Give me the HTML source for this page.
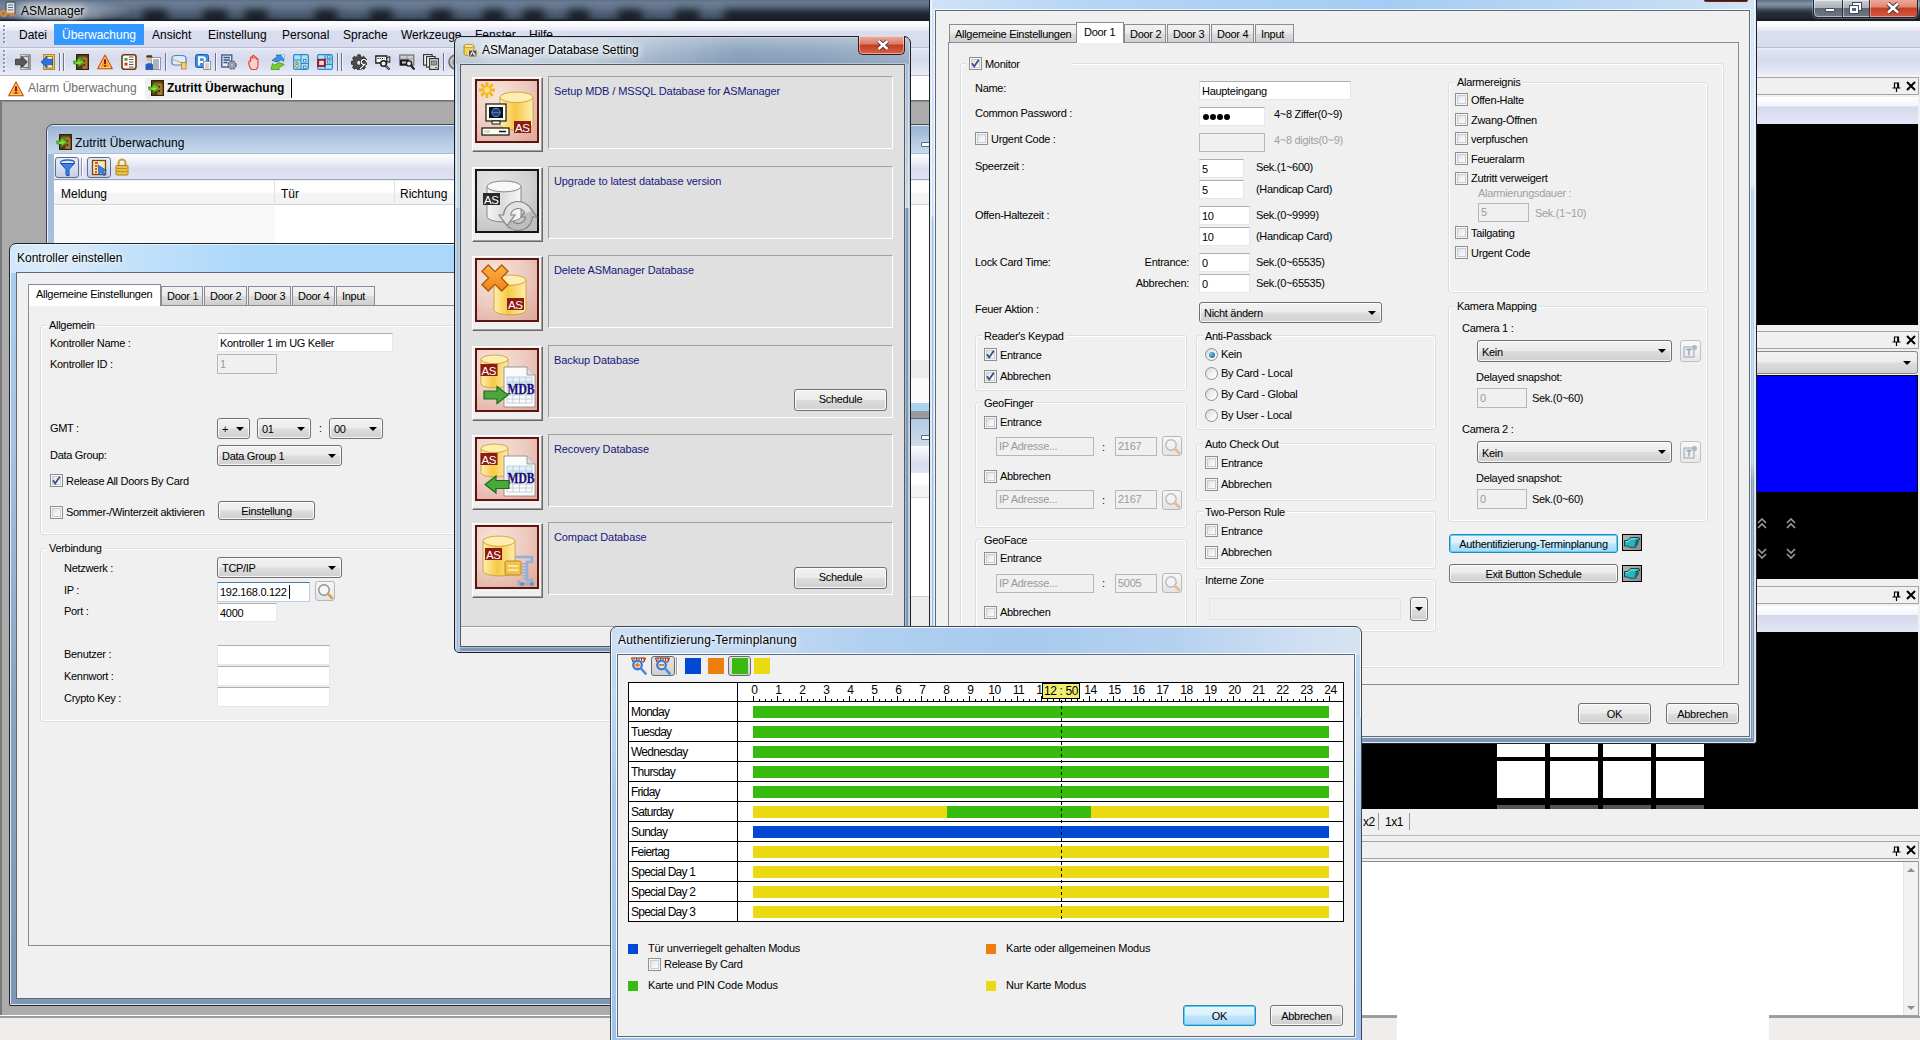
<!DOCTYPE html>
<html><head><meta charset="utf-8"><title>ASManager</title>
<style>
html,body{margin:0;padding:0;background:#ababab;}
body{width:1920px;height:1040px;overflow:hidden;font-family:"Liberation Sans",sans-serif;}
#root{position:relative;width:1920px;height:1040px;overflow:hidden;background:#ababab;}
#root div,#root span,#root svg.a{position:absolute;box-sizing:border-box;}
.t{font-size:11px;line-height:14px;letter-spacing:-0.3px;color:#000;white-space:pre;}
.t.g{color:#a0a0a0;}
.t.nv{color:#17177c;letter-spacing:-0.1px;}
.s{font-size:12px;line-height:16px;color:#000;white-space:pre;}
.gl{background:#f0f0f0;}
.tb{background:#fff;border:1px solid #e3e6ec;border-top-color:#abadb3;font-size:11px;letter-spacing:-0.3px;padding-left:2px;padding-top:1px;white-space:pre;overflow:hidden;color:#000;}
.tb.dis{background:#f0f0f0;border:1px solid #b4b8bc;color:#9a9a9a;padding-top:0;}
.tb.foc{border:1px solid #b5cfe7;border-top-color:#3d7bad;padding-top:0;}
.cb{width:13px;height:13px;border:1px solid #8e8f8f;background:linear-gradient(135deg,#d4d7da 0%,#f4f5f6 60%,#fff 100%);box-shadow:inset 0 0 0 1px #f6f6f6,inset 0 0 0 2px #c9ccd1;}
.rd{width:13px;height:13px;border:1px solid #8e8f8f;border-radius:50%;background:linear-gradient(135deg,#d4d7da 0%,#f4f5f6 60%,#fff 100%);}
.rd i{position:absolute;left:2.5px;top:2.5px;width:6px;height:6px;border-radius:50%;background:radial-gradient(circle at 35% 35%,#6ec3f0,#14538c);display:block;}
.cmb{border:1px solid #707070;border-radius:3px;background:linear-gradient(#f2f2f2 0%,#ebebeb 48%,#dddddd 52%,#cfcfcf 100%);box-shadow:inset 0 0 0 1px rgba(255,255,255,.8);font-size:11px;letter-spacing:-0.3px;white-space:pre;overflow:hidden;}
.cmb span{left:4px;top:1px;}
.cmb b{position:absolute;right:5px;top:50%;margin-top:-2px;width:0;height:0;border-left:4px solid transparent;border-right:4px solid transparent;border-top:4px solid #000;}
.btn{border:1px solid #707070;border-radius:3px;background:linear-gradient(#f2f2f2 0%,#ebebeb 48%,#dddddd 52%,#cfcfcf 100%);box-shadow:inset 0 0 0 1px rgba(255,255,255,.85);font-size:11px;letter-spacing:-0.3px;text-align:center;white-space:pre;overflow:hidden;padding-top:1px;}
.btn.def{border-color:#3c7fb1;background:linear-gradient(#eaf6fd 0%,#d9f0fc 48%,#bee6fd 52%,#a7d9f5 100%);box-shadow:inset 0 0 0 1px #48d8fb;}
.grp{border:1px solid #dadfe3;border-radius:3px;box-shadow:inset 0 0 0 1px #fff, 0 0 0 0 #fff;}
.tabpage{background:#f0f0f0;border:1px solid #898c95;}
.tab{border:1px solid #898c95;border-bottom:none;background:linear-gradient(#f2f2f2 0%,#ebebeb 48%,#dddddd 52%,#cfcfcf 100%);font-size:11px;letter-spacing:-0.3px;white-space:pre;}
.tab span{left:5px;top:2px;line-height:14px;}
.tab.sel{background:#fff;z-index:2;}
.tab.sel span{left:7px;top:2px;}
.magb{width:20px;height:20px;border:1px solid #b8b8b8;border-radius:3px;background:linear-gradient(#f6f6f6,#e4e4e4);}
.magb svg{position:absolute;left:0;top:0;}
</style></head><body><div id="root">
<div class="" style="left:0px;top:0px;width:1920px;height:21px;background:linear-gradient(#5f7186 0%,#6b7d94 12%,#64768d 35%,#5a6b82 55%,#52637a 80%,#46566a 100%);"></div>
<div style="left:0;top:0;width:1920px;height:21px;overflow:hidden">
<div class="" style="left:143px;top:10px;width:24px;height:16px;background:#161c24;filter:blur(4px)"></div>
<div class="" style="left:203px;top:10px;width:24px;height:16px;background:#161c24;filter:blur(4px)"></div>
<div class="" style="left:245px;top:10px;width:22px;height:16px;background:#161c24;filter:blur(4px)"></div>
<div class="" style="left:315px;top:10px;width:22px;height:16px;background:#161c24;filter:blur(4px)"></div>
<div class="" style="left:370px;top:10px;width:22px;height:16px;background:#161c24;filter:blur(4px)"></div>
<div class="" style="left:430px;top:10px;width:22px;height:16px;background:#161c24;filter:blur(4px)"></div>
<div class="" style="left:483px;top:10px;width:21px;height:16px;background:#161c24;filter:blur(4px)"></div>
<div class="" style="left:523px;top:10px;width:21px;height:16px;background:#161c24;filter:blur(4px)"></div>
<div class="" style="left:568px;top:10px;width:21px;height:16px;background:#161c24;filter:blur(4px)"></div>
<div class="" style="left:618px;top:10px;width:24px;height:16px;background:#161c24;filter:blur(4px)"></div>
<div class="" style="left:675px;top:10px;width:24px;height:16px;background:#161c24;filter:blur(4px)"></div>
<div class="" style="left:724px;top:10px;width:236px;height:16px;background:#161c24;filter:blur(4px)"></div>
<div class="" style="left:100px;top:14px;width:860px;height:10px;background:rgba(30,38,48,.3);filter:blur(3px)"></div>
</div>
<div class="" style="left:1750px;top:0px;width:170px;height:21px;background:linear-gradient(#5e6f82 0%,#8294a8 18%,#6c7d90 32%,#3b4652 48%,#262e38 62%,#1a2129 100%);"></div>
<div class="" style="left:0px;top:18px;width:1920px;height:2px;background:linear-gradient(rgba(20,25,32,0),rgba(20,25,32,.7))"></div>
<div class="" style="left:0px;top:20px;width:1920px;height:2px;background:#f4f6fb;border-top:1px solid #1c2128;"></div>
<div class="" style="left:0px;top:0px;width:130px;height:20px;background:radial-gradient(ellipse at 45% 55%,rgba(190,198,208,.75) 0%,rgba(170,180,192,.5) 40%,rgba(150,160,175,0) 75%)"></div>
<svg class="a" style="left:0;top:1px" width="17" height="18" viewBox="0 0 17 18"><rect x="6" y="1" width="9" height="12" rx="1" fill="#dfe6ee" stroke="#4a5868" stroke-width="1.3"/><path d="M8 4h5M8 6.5h5M8 9h5" stroke="#5b6b7d" stroke-width="1"/><circle cx="3.5" cy="12.5" r="2.6" fill="none" stroke="#e8892a" stroke-width="1.8"/><path d="M6 12.5h8M11 12.5v3M13.5 12.5v2.5" stroke="#e8892a" stroke-width="1.8"/></svg>
<span class="s" style="left:21px;top:3px;color:#000;text-shadow:0 0 6px #fff,0 0 8px #fff,0 0 10px rgba(255,255,255,.9);">ASManager</span>
<div class="" style="left:1813px;top:0px;width:105px;height:18px;border:1px solid #1c232b;border-top:none;border-radius:0 0 5px 5px;background:linear-gradient(#ccd1d7 0%,#a9b0b9 45%,#5f6975 50%,#6f7986 100%);box-shadow:inset 0 0 0 1px rgba(255,255,255,.5),0 0 0 1px rgba(255,255,255,.25);overflow:hidden"><div style="left:55px;top:-1px;width:49px;height:18px;background:linear-gradient(#ecb0a2 0%,#df8570 45%,#c63d24 50%,#d25a40 100%);border-left:1px solid #4a2a26;box-shadow:inset 0 0 0 1px rgba(255,255,255,.4)"></div><div style="left:28px;top:-1px;width:1px;height:18px;background:#2a323c"></div><div style="left:29px;top:0;width:1px;height:17px;background:rgba(255,255,255,.4)"></div><div style="left:11px;top:8px;width:10px;height:4px;background:#fff;border:1px solid #444c56;border-radius:1px"></div><div style="left:39px;top:3px;width:8px;height:7px;border:2px solid #fff;outline:1px solid #444c56"></div><div style="left:36px;top:6px;width:8px;height:7px;border:2px solid #fff;outline:1px solid #444c56;background:#5a6674"></div><svg class="a" style="left:72px;top:2px" width="14" height="12" viewBox="0 0 14 12"><path d="M2 1.5 L12 10.5 M12 1.5 L2 10.5" stroke="#3a3030" stroke-width="4.4"/><path d="M2 1.5 L12 10.5 M12 1.5 L2 10.5" stroke="#fff" stroke-width="2.6"/></svg></div>
<div class="" style="left:0px;top:22px;width:1920px;height:26px;background:linear-gradient(#ffffff 0%,#f6f7fc 14%,#e6e9f5 34%,#d9ddee 37%,#d8dcee 100%);border-bottom:1px solid #b9bdcd"></div>
<div class="" style="left:3px;top:25px;width:2px;height:20px;background:repeating-linear-gradient(#8f97b8 0px,#8f97b8 2px,transparent 2px,transparent 4px)"></div>
<div class="" style="left:4px;top:26px;width:2px;height:20px;background:repeating-linear-gradient(#fff 0px,#fff 2px,transparent 2px,transparent 4px);z-index:0;opacity:.9;mix-blend-mode:normal;clip-path:inset(0 0 0 1px)"></div>
<div class="" style="left:54px;top:24px;width:90px;height:21px;background:#3399ff;"></div>
<span class="s" style="left:19px;top:27px;">Datei</span>
<span class="s" style="left:62px;top:27px;color:#fff">Überwachung</span>
<span class="s" style="left:152px;top:27px;">Ansicht</span>
<span class="s" style="left:208px;top:27px;">Einstellung</span>
<span class="s" style="left:282px;top:27px;">Personal</span>
<span class="s" style="left:343px;top:27px;">Sprache</span>
<span class="s" style="left:401px;top:27px;">Werkzeuge</span>
<span class="s" style="left:475px;top:27px;">Fenster</span>
<span class="s" style="left:529px;top:27px;">Hilfe</span>
<div class="" style="left:0px;top:48px;width:1920px;height:28px;background:linear-gradient(#eef0f9 0%,#dde1f0 12%,#d6daec 45%,#dde0f0 70%,#ebedf8 100%);border-bottom:1px solid #b4b8c6;"></div>
<div class="" style="left:3px;top:50px;width:2px;height:24px;background:repeating-linear-gradient(#8f97b8 0px,#8f97b8 2px,transparent 2px,transparent 4px)"></div>
<div class="" style="left:4px;top:51px;width:2px;height:24px;background:repeating-linear-gradient(#fff 0px,#fff 2px,transparent 2px,transparent 4px);clip-path:inset(0 0 0 1px)"></div>
<div class="" style="left:59px;top:53px;width:1px;height:18px;background:#6c7290"></div>
<div class="" style="left:60px;top:53px;width:1px;height:18px;background:rgba(255,255,255,.7)"></div>
<div class="" style="left:63px;top:53px;width:1px;height:18px;background:#6c7290"></div>
<div class="" style="left:64px;top:53px;width:1px;height:18px;background:rgba(255,255,255,.7)"></div>
<div class="" style="left:165px;top:53px;width:1px;height:18px;background:#6c7290"></div>
<div class="" style="left:166px;top:53px;width:1px;height:18px;background:rgba(255,255,255,.7)"></div>
<div class="" style="left:215px;top:53px;width:1px;height:18px;background:#6c7290"></div>
<div class="" style="left:216px;top:53px;width:1px;height:18px;background:rgba(255,255,255,.7)"></div>
<div class="" style="left:337px;top:53px;width:1px;height:18px;background:#6c7290"></div>
<div class="" style="left:338px;top:53px;width:1px;height:18px;background:rgba(255,255,255,.7)"></div>
<div class="" style="left:341px;top:53px;width:1px;height:18px;background:#6c7290"></div>
<div class="" style="left:342px;top:53px;width:1px;height:18px;background:rgba(255,255,255,.7)"></div>
<div class="" style="left:443px;top:53px;width:1px;height:18px;background:#6c7290"></div>
<div class="" style="left:444px;top:53px;width:1px;height:18px;background:rgba(255,255,255,.7)"></div>
<svg class="a" style="left:15px;top:54px" width="16" height="16" viewBox="0 0 16 16"><defs><linearGradient id="gex" x1="0" x2="1"><stop offset="0" stop-color="#f4f4f4"/><stop offset="1" stop-color="#8c8c8c"/></linearGradient></defs><rect x="5.500" y="0.500" width="10" height="15" fill="url(#gex)" stroke="#9a9a9a"/><rect x="8" y="2.500" width="5.500" height="11" fill="#d8d8d8" stroke="#6a6a6a" stroke-width=".800"/><path d="M0.500 5.200h6V2.300L12.300 8 6.500 13.700v-2.900h-6z" fill="#5a5a5a" stroke="#2e2e2e" stroke-width=".800"/></svg>
<svg class="a" style="left:40px;top:54px" width="16" height="16" viewBox="0 0 16 16"><rect x="3.500" y="0.500" width="11" height="15" fill="#e9c566" stroke="#b58a28"/><rect x="6" y="2.500" width="6.500" height="11.500" fill="#fdf1c4" stroke="#8a6a20" stroke-width=".800"/><path d="M12.500 5.200H7V2.300L1 8l6 5.700v-2.900h5.500z" fill="#2a72e0" stroke="#1550b0" stroke-width=".800"/></svg>
<svg class="a" style="left:73px;top:54px" width="16" height="16" viewBox="0 0 16 16"><rect x="3.500" y="0.500" width="12" height="15" fill="#4d3b12" stroke="#2e2208"/><path d="M5.500 2.500h8v2l-6 1.500z" fill="#8a6a2a"/><rect x="9.500" y="4" width="5" height="11" fill="#a8742c"/><rect x="10.500" y="6" width="1.500" height="2" fill="#3a2a08"/><rect x="10.500" y="10" width="1.500" height="2" fill="#3a2a08"/><path d="M0.500 7h3.500l1.500-3.200 6 4.200-6.500 5 .5-3H1z" fill="#6cc428" stroke="#3c8c14" stroke-width=".800"/><path d="M3.500 9.500l4-1" stroke="#b4ec7c" stroke-width="1"/></svg>
<svg class="a" style="left:97px;top:54px" width="16" height="16" viewBox="0 0 16 16"><path d="M8 1 L15.300 14.700 H0.700 Z" fill="#f99a1c" stroke="#c4500a" stroke-width="1.100" stroke-linejoin="round"/><path d="M8 3.300 L13.300 13.500 H2.700 Z" fill="none" stroke="#ffd28a" stroke-width=".900"/><rect x="7.100" y="5.300" width="1.800" height="4.700" fill="#7a1408"/><rect x="7.100" y="11" width="1.800" height="1.700" fill="#7a1408"/></svg>
<svg class="a" style="left:121px;top:54px" width="16" height="16" viewBox="0 0 16 16"><rect x="1" y="0.800" width="14" height="14.500" rx="2.200" fill="#fffaf0" stroke="#6a3a0c" stroke-width="1.600"/><rect x="3.500" y="4" width="3" height="2.800" fill="#3aa060"/><rect x="3.500" y="8.700" width="3" height="2.800" fill="#d03428"/><path d="M8 3h4.500M8 5.500h4.500M8 8h4.500M8 10.500h4.500M8 13h4.500" stroke="#5a5a5a" stroke-width="1"/></svg>
<svg class="a" style="left:145px;top:54px" width="16" height="16" viewBox="0 0 16 16"><rect x="6.500" y="3.500" width="9" height="12" fill="#fff" stroke="#8a9ab0"/><path d="M8 6h6M8 8h6M8 10h6M8 12h6M8 14h6" stroke="#5a6a82" stroke-width="1"/><circle cx="4.300" cy="5" r="2.500" fill="#e8b890"/><path d="M1 3.600h6.600l-.9-2.300H1.900z" fill="#3a3420"/><path d="M0.500 16v-5c0-2.200 7.500-2.200 7.500 0v5z" fill="#2a5cb8"/></svg>
<svg class="a" style="left:171px;top:54px" width="16" height="16" viewBox="0 0 16 16"><path d="M1 4.500c0-2 2-3 4-3h6c2 0 4 1 4 3v4.500c0 1-1 2-2 2H3c-1 0-2-1-2-2z" fill="#dcecfc" stroke="#4a82c4" stroke-width="1.200"/><path d="M2 5.500l9 3.500" stroke="#d8b060" stroke-width="1.200"/><rect x="10.500" y="8.500" width="4.500" height="6.500" fill="#f4d070" stroke="#b58a28" stroke-width=".900"/></svg>
<svg class="a" style="left:195px;top:54px" width="16" height="16" viewBox="0 0 16 16"><rect x="0.500" y="0.500" width="13" height="13" rx="2" fill="#3a90e4" stroke="#1a5cb0"/><path d="M4 11.500V3.200h3.600a2.400 2.400 0 0 1 0 4.800H4" stroke="#fff" stroke-width="1.900" fill="none"/><rect x="8.500" y="7.500" width="7" height="8" fill="#fff" stroke="#8a8a8a" stroke-width=".900"/><path d="M10 10h4M10 12h4M10 14h4" stroke="#8a8a8a" stroke-width=".800"/></svg>
<svg class="a" style="left:221px;top:54px" width="16" height="16" viewBox="0 0 16 16"><rect x="0.800" y="1" width="10" height="12" fill="#e4ecf6" stroke="#3a5684" stroke-width="1.300"/><path d="M2.500 3.500h6.500M2.500 6h6.500M2.500 8.500h4" stroke="#3a5684" stroke-width="1.300"/><circle cx="11" cy="11" r="4" fill="#9aa4b2" stroke="#5a6474" stroke-width="1.400" stroke-dasharray="2.200 1"/><circle cx="11" cy="11" r="1.400" fill="#e8ecf2" stroke="#5a6474" stroke-width=".600"/></svg>
<svg class="a" style="left:247px;top:54px" width="16" height="16" viewBox="0 0 16 16"><path d="M4.500 15.500c-1.800-1.800-2.800-4.500-2.800-7.500 0-1.400 1.800-1.400 1.800 0V4c0-1.500 1.900-1.500 1.900 0V2.500c0-1.500 2-1.500 2 0V3.800c0-1.400 1.900-1.400 1.900 0v1.700c0-1.200 1.700-1.200 1.700 0V11c0 2-.8 3.500-1.700 4.500z" fill="#fbd0c8" stroke="#e0483a" stroke-width="1.100"/><path d="M4 6c1-3 5-3 6.500 0" fill="none" stroke="#e0483a" stroke-width=".800"/></svg>
<svg class="a" style="left:269px;top:54px" width="16" height="16" viewBox="0 0 16 16"><path d="M15.500 1l-1 6.500-2.200-1.700L8 8 3 6.500 8.500 2.200 7 1z" fill="#3a90e4" stroke="#1a5cb0" stroke-width=".700"/><path d="M12 0.500h3.500v5" fill="#e8f2fc" stroke="#8aaed8" stroke-width=".600"/><path d="M2 15.500l1.500-6 2 1.600 4.800-2.600 5 2-6 3.800 1.500 1.200z" fill="#7ccc30" stroke="#3c8c14" stroke-width=".700"/></svg>
<svg class="a" style="left:293px;top:54px" width="16" height="16" viewBox="0 0 16 16"><rect x="0.600" y="0.600" width="14.800" height="14.800" rx="1.500" fill="#aee0f6" stroke="#2a8ad0" stroke-width="1.200"/><path d="M8 .600v14.800M.600 6h7.400M8 9.500h7.400" stroke="#2a8ad0" stroke-width="1.100"/><rect x="10.500" y="5.500" width="2.500" height="2.500" fill="#e8f6fc" stroke="#2a6aa8" stroke-width=".700"/><rect x="10.500" y="12" width="2.500" height="2.500" fill="#e8f6fc" stroke="#2a6aa8" stroke-width=".700"/><circle cx="4" cy="9" r="1.300" fill="#f4e08a" stroke="#6a5a1a" stroke-width=".600"/><rect x="2.700" y="10.500" width="2.600" height="3" rx=".800" fill="#f4e08a" stroke="#6a5a1a" stroke-width=".600"/></svg>
<svg class="a" style="left:317px;top:54px" width="16" height="16" viewBox="0 0 16 16"><rect x="0.600" y="0.600" width="14.800" height="14.800" rx="1.500" fill="#aee0f6" stroke="#2a8ad0" stroke-width="1.200"/><path d="M8 .600v14.800M8 5h7.400M8 10.500h7.400" stroke="#2a8ad0" stroke-width="1.100"/><rect x="10.500" y="1.800" width="2.500" height="2.300" fill="#e8f6fc" stroke="#2a6aa8" stroke-width=".700"/><rect x="10.500" y="6.800" width="2.500" height="2.300" fill="#e8f6fc" stroke="#2a6aa8" stroke-width=".700"/><rect x="1.200" y="5.800" width="6.600" height="6.200" fill="#f4d8d8" stroke="#9a1018" stroke-width="1.800"/></svg>
<svg class="a" style="left:351px;top:54px" width="16" height="16" viewBox="0 0 16 16"><path d="M6.700.800h2.600l.4 1.900 1.300.6 1.700-1 1.800 1.800-1 1.700.6 1.300 1.900.4v2.600l-1.900.4-.6 1.300 1 1.700-1.800 1.800-1.700-1-1.300.6-.4 1.900H6.700l-.4-1.900-1.300-.6-1.700 1-1.800-1.800 1-1.700-.6-1.300L0 10.100V7.500l1.900-.4.600-1.300-1-1.700 1.800-1.800 1.700 1 1.300-.6z" fill="#4a4a4a" stroke="#1e1e1e" stroke-width=".700"/><circle cx="8" cy="8.800" r="2.400" fill="#e4e4e4" stroke="#1e1e1e" stroke-width=".600"/><path d="M9 15l4.500-4.500a2.600 2.600 0 1 1 2-2" fill="none" stroke="#111" stroke-width="2.800"/><path d="M9 15l4.500-4.500a2.600 2.600 0 1 1 2-2" fill="none" stroke="#fff" stroke-width="1.400"/></svg>
<svg class="a" style="left:375px;top:54px" width="16" height="16" viewBox="0 0 16 16"><path d="M.800 2h11v7h-11z" fill="#f4f4f4" stroke="#1e1e1e" stroke-width="1.300"/><path d="M11.800 4l3-1.500v6l-3-1.500z" fill="#ddd" stroke="#1e1e1e" stroke-width="1"/><path d="M2.500 4.500h7" stroke="#1e1e1e" stroke-width="1.200" stroke-dasharray="1.200 1"/><circle cx="8.500" cy="9.500" r="2.800" fill="#f4f4f4" stroke="#1e1e1e" stroke-width="1.500"/><path d="M10.500 11.800l4 3.800" stroke="#1e1e1e" stroke-width="2.200"/><path d="M10.800 12.100l3.400 3.200" stroke="#eee" stroke-width=".700"/></svg>
<svg class="a" style="left:399px;top:54px" width="16" height="16" viewBox="0 0 16 16"><rect x=".800" y="1" width="14" height="10" fill="#cfcfcf" stroke="#5a5a5a" stroke-width="1"/><path d="M8 1v10M.800 5h14" stroke="#8a8a8a" stroke-width=".800"/><rect x="1" y="5.500" width="9" height="6" fill="#1a1a1a"/><rect x="3" y="7.500" width="5" height="2" fill="#cfcfcf"/><circle cx="10" cy="9.500" r="2.600" fill="#e8e8e8" stroke="#1e1e1e" stroke-width="1.400"/><path d="M12 11.500l3.500 4" stroke="#1e1e1e" stroke-width="2.200"/></svg>
<svg class="a" style="left:423px;top:54px" width="16" height="16" viewBox="0 0 16 16"><rect x=".600" y=".600" width="8.500" height="10.500" fill="#f4f4f4" stroke="#2e2e2e" stroke-width="1.100"/><rect x="3.600" y="2.600" width="8.500" height="10.500" fill="#f4f4f4" stroke="#2e2e2e" stroke-width="1.100"/><rect x="6.600" y="4.600" width="8.800" height="10.800" fill="#dcdcdc" stroke="#2e2e2e" stroke-width="1.100"/><rect x="8.600" y="7" width="4.800" height="4" fill="#9a9a9a" stroke="#4a4a4a" stroke-width=".700"/><path d="M12 13.500h2" stroke="#4a4a4a" stroke-width=".800"/></svg>
<svg class="a" style="left:447px;top:54px" width="16" height="16" viewBox="0 0 16 16"><circle cx="9" cy="8" r="7" fill="#c4c4c4" stroke="#6a6a6a" stroke-width="1.600"/><circle cx="9" cy="8" r="3.500" fill="#8a8a8a"/></svg>
<div class="" style="left:0px;top:76px;width:1920px;height:24px;background:#fff;"></div>
<div class="" style="left:0px;top:100px;width:1920px;height:1px;background:#6e6e6e"></div>
<div class="" style="left:145px;top:78px;width:145px;height:21px;background:#f0f0f0"></div>
<div class="" style="left:291px;top:78px;width:1px;height:20px;background:#000"></div>
<svg class="a" style="left:8px;top:81px" width="16" height="16" viewBox="0 0 16 16"><path d="M8 1 L15.300 14.700 H0.700 Z" fill="#f99a1c" stroke="#c4500a" stroke-width="1.100" stroke-linejoin="round"/><path d="M8 3.300 L13.300 13.500 H2.700 Z" fill="none" stroke="#ffd28a" stroke-width=".900"/><rect x="7.100" y="5.300" width="1.800" height="4.700" fill="#7a1408"/><rect x="7.100" y="11" width="1.800" height="1.700" fill="#7a1408"/></svg>
<span class="s" style="left:28px;top:80px;color:#6d6d6d">Alarm Überwachung</span>
<svg class="a" style="left:148px;top:80px" width="16" height="16" viewBox="0 0 16 16"><rect x="3.500" y="0.500" width="12" height="15" fill="#4d3b12" stroke="#2e2208"/><path d="M5.500 2.500h8v2l-6 1.500z" fill="#8a6a2a"/><rect x="9.500" y="4" width="5" height="11" fill="#a8742c"/><rect x="10.500" y="6" width="1.500" height="2" fill="#3a2a08"/><rect x="10.500" y="10" width="1.500" height="2" fill="#3a2a08"/><path d="M0.500 7h3.500l1.500-3.200 6 4.200-6.500 5 .5-3H1z" fill="#6cc428" stroke="#3c8c14" stroke-width=".800"/><path d="M3.500 9.500l4-1" stroke="#b4ec7c" stroke-width="1"/></svg>
<span class="s" style="left:167px;top:80px;font-weight:bold">Zutritt Überwachung</span>
<div class="" style="left:0px;top:101px;width:1920px;height:915px;background:#ababab;border-left:2px solid #7a7a7a;border-top:1px solid #8a8a8a"></div>
<div class="" style="left:0px;top:1015px;width:1920px;height:3px;background:#fff;border-bottom:2px solid #9c9c9c"></div>
<div class="" style="left:0px;top:1018px;width:1920px;height:22px;background:#f0eeed;"></div>
<div class="" style="left:1757px;top:75px;width:163px;height:2px;background:#f4f4f4"></div>
<div class="" style="left:1757px;top:77px;width:163px;height:939px;background:#f0f0f0"></div>
<div class="" style="left:1755px;top:77px;width:164px;height:18px;background:#f0f0f0;border:1px solid #a5a5a5;"></div>
<svg class="a" style="left:1890px;top:80px" width="28" height="12" viewBox="0 0 28 12"><path d="M4.5 3h4v5h-4z M2.5 8h8 M6.5 8v4" stroke="#000" stroke-width="1.2" fill="none"/><path d="M8 3v5" stroke="#000" stroke-width="1.8"/><path d="M17 2 L25 10 M25 2 L17 10" stroke="#000" stroke-width="2"/></svg>
<div class="" style="left:1757px;top:97px;width:161px;height:27px;background:linear-gradient(#ffffff 0%,#f2f4fb 34%,#d4d8ec 36%,#e4e7f5 100%);"></div>
<div class="" style="left:1757px;top:124px;width:161px;height:201px;background:#000"></div>
<div class="" style="left:1755px;top:331px;width:164px;height:18px;background:#f0f0f0;border:1px solid #a5a5a5;"></div>
<svg class="a" style="left:1890px;top:334px" width="28" height="12" viewBox="0 0 28 12"><path d="M4.5 3h4v5h-4z M2.5 8h8 M6.5 8v4" stroke="#000" stroke-width="1.2" fill="none"/><path d="M8 3v5" stroke="#000" stroke-width="1.8"/><path d="M17 2 L25 10 M25 2 L17 10" stroke="#000" stroke-width="2"/></svg>
<div class="" style="left:1757px;top:351px;width:161px;height:23px;background:linear-gradient(#f2f2f2 0%,#ebebeb 48%,#dddddd 52%,#cfcfcf 100%);border:1px solid #8a8a8a;border-left:none;border-radius:0 3px 3px 0"><div style="right:6px;top:9px;width:0;height:0;border-left:4px solid transparent;border-right:4px solid transparent;border-top:4px solid #000"></div></div>
<div class="" style="left:1757px;top:375px;width:161px;height:204px;background:#000"></div>
<div class="" style="left:1757px;top:376px;width:160px;height:116px;background:#0000ff"></div>
<svg class="a" style="left:1757px;top:518px" width="10" height="12" viewBox="0 0 10 12"><path d="M1 5 L5 1 L9 5 M1 10 L5 6 L9 10" stroke="#9a9a9a" stroke-width="1.6" fill="none"/></svg>
<svg class="a" style="left:1757px;top:547px" width="10" height="12" viewBox="0 0 10 12"><path d="M1 2 L5 6 L9 2 M1 7 L5 11 L9 7" stroke="#9a9a9a" stroke-width="1.6" fill="none"/></svg>
<svg class="a" style="left:1786px;top:518px" width="10" height="12" viewBox="0 0 10 12"><path d="M1 5 L5 1 L9 5 M1 10 L5 6 L9 10" stroke="#9a9a9a" stroke-width="1.6" fill="none"/></svg>
<svg class="a" style="left:1786px;top:547px" width="10" height="12" viewBox="0 0 10 12"><path d="M1 2 L5 6 L9 2 M1 7 L5 11 L9 7" stroke="#9a9a9a" stroke-width="1.6" fill="none"/></svg>
<div class="" style="left:1755px;top:586px;width:164px;height:18px;background:#f0f0f0;border:1px solid #a5a5a5;"></div>
<svg class="a" style="left:1890px;top:589px" width="28" height="12" viewBox="0 0 28 12"><path d="M4.5 3h4v5h-4z M2.5 8h8 M6.5 8v4" stroke="#000" stroke-width="1.2" fill="none"/><path d="M8 3v5" stroke="#000" stroke-width="1.8"/><path d="M17 2 L25 10 M25 2 L17 10" stroke="#000" stroke-width="2"/></svg>
<div class="" style="left:1757px;top:606px;width:161px;height:26px;background:linear-gradient(#ffffff 0%,#f2f4fb 34%,#d4d8ec 36%,#e4e7f5 100%);"></div>
<div class="" style="left:1000px;top:632px;width:918px;height:177px;background:#000"></div>
<div class="" style="left:1497px;top:700px;width:48px;height:57px;background:#fff"></div>
<div class="" style="left:1497px;top:761px;width:48px;height:37px;background:#fff"></div>
<div class="" style="left:1497px;top:805px;width:48px;height:4px;background:#555"></div>
<div class="" style="left:1550px;top:700px;width:48px;height:57px;background:#fff"></div>
<div class="" style="left:1550px;top:761px;width:48px;height:37px;background:#fff"></div>
<div class="" style="left:1550px;top:805px;width:48px;height:4px;background:#555"></div>
<div class="" style="left:1603px;top:700px;width:48px;height:57px;background:#fff"></div>
<div class="" style="left:1603px;top:761px;width:48px;height:37px;background:#fff"></div>
<div class="" style="left:1603px;top:805px;width:48px;height:4px;background:#555"></div>
<div class="" style="left:1656px;top:700px;width:48px;height:57px;background:#fff"></div>
<div class="" style="left:1656px;top:761px;width:48px;height:37px;background:#fff"></div>
<div class="" style="left:1656px;top:805px;width:48px;height:4px;background:#555"></div>
<div class="" style="left:1000px;top:809px;width:920px;height:27px;background:#f0f0f0;border-bottom:1px solid #b9b9b9"></div>
<span class="t" style="left:1363px;top:815px;font-size:12px;letter-spacing:-0.5px">x2</span>
<div class="" style="left:1378px;top:813px;width:1px;height:17px;background:#9a9a9a"></div>
<span class="t" style="left:1385px;top:815px;font-size:12px;letter-spacing:-0.5px">1x1</span>
<div class="" style="left:1409px;top:813px;width:1px;height:17px;background:#9a9a9a"></div>
<div class="" style="left:1000px;top:836px;width:920px;height:26px;background:#f0f0f0"></div>
<div class="" style="left:998px;top:841px;width:921px;height:18px;background:#f0f0f0;border:1px solid #a5a5a5;"></div>
<svg class="a" style="left:1890px;top:844px" width="28" height="12" viewBox="0 0 28 12"><path d="M4.5 3h4v5h-4z M2.5 8h8 M6.5 8v4" stroke="#000" stroke-width="1.2" fill="none"/><path d="M8 3v5" stroke="#000" stroke-width="1.8"/><path d="M17 2 L25 10 M25 2 L17 10" stroke="#000" stroke-width="2"/></svg>
<div class="" style="left:1000px;top:861px;width:919px;height:155px;background:#fff;border:1px solid #a0a0a0;border-top-color:#8c8c8c"></div>
<div class="" style="left:1903px;top:862px;width:15px;height:153px;background:#f1f1f1;border-left:1px solid #e3e3e3"></div>
<svg class="a" style="left:1906px;top:866px" width="10" height="8" viewBox="0 0 10 8"><path d="M1 6 L5 2 L9 6 Z" fill="#8c8c8c"/></svg>
<svg class="a" style="left:1906px;top:1004px" width="10" height="8" viewBox="0 0 10 8"><path d="M1 2 L5 6 L9 2 Z" fill="#8c8c8c"/></svg>
<div class="" style="left:1397px;top:1010px;width:372px;height:30px;background:#fff"></div>
<div style="left:46px;top:124px;width:954px;height:288px;border:1px solid #3c4857;border-radius:7px 7px 2px 2px;background:linear-gradient(#9db7d6,#b8cde6);box-shadow:inset 0 0 0 1px rgba(255,255,255,.75);overflow:hidden;"><div style="left:1px;top:1px;right:1px;height:28px;width:950px;background:linear-gradient(#9ab4d4 0%,#b5cbe5 55%,#c6d8ed 100%)"></div><div style="left:6px;top:28px;width:940px;height:252px;border:1px solid rgba(255,255,255,.8);"></div></div>
<div style="left:53px;top:153px;width:940px;height:252px;border:1px solid #a9bcd2;background:#f0f0f0"></div>
<svg class="a" style="left:56px;top:134px" width="16" height="16" viewBox="0 0 16 16"><rect x="3.500" y="0.500" width="12" height="15" fill="#4d3b12" stroke="#2e2208"/><path d="M5.500 2.500h8v2l-6 1.500z" fill="#8a6a2a"/><rect x="9.500" y="4" width="5" height="11" fill="#a8742c"/><rect x="10.500" y="6" width="1.500" height="2" fill="#3a2a08"/><rect x="10.500" y="10" width="1.500" height="2" fill="#3a2a08"/><path d="M0.500 7h3.500l1.500-3.200 6 4.200-6.500 5 .5-3H1z" fill="#6cc428" stroke="#3c8c14" stroke-width=".800"/><path d="M3.500 9.500l4-1" stroke="#b4ec7c" stroke-width="1"/></svg>
<span class="s" style="left:75px;top:134.5px;letter-spacing:0.08px">Zutritt Überwachung</span>
<div class="" style="left:921px;top:142px;width:11px;height:5px;background:#fff;border:1px solid #5a6a7e;border-radius:1px"></div>
<div class="" style="left:54px;top:154px;width:939px;height:26px;background:linear-gradient(#fdfdff 0%,#eceef8 35%,#dadeef 60%,#dfe3f2 100%);border-bottom:1px solid #9da3b8"></div>
<div class="" style="left:55px;top:157px;width:24px;height:21px;border:1px solid #5c6c8c;border-radius:3px;background:linear-gradient(#e8ecf8,#c8d0e8)"></div>
<svg class="a" style="left:59px;top:159px" width="17" height="18" viewBox="0 0 17 18"><ellipse cx="8.500" cy="3.500" rx="7" ry="2.500" fill="#dbe9fb" stroke="#2a62c8" stroke-width="1.300"/><path d="M1.800 4.500 L7 10.500 V16 L10 17 V10.500 L15.200 4.500 Z" fill="#3b82e8" stroke="#1d4fb0" stroke-width="1"/></svg>
<div class="" style="left:81px;top:158px;width:1px;height:18px;background:#8d93ad"></div>
<div class="" style="left:82px;top:158px;width:1px;height:18px;background:#fff"></div>
<div class="" style="left:87px;top:157px;width:24px;height:21px;border:1px solid #5c6c8c;border-radius:3px;background:linear-gradient(#e8ecf8,#c8d0e8)"></div>
<svg class="a" style="left:91px;top:159px" width="17" height="18" viewBox="0 0 17 18"><rect x="1.500" y="1.500" width="13" height="14" fill="#fbe7a8" stroke="#6b4a1b" stroke-width="1.300"/><path d="M4 4h3M4 7h2M4 10h2M4 13h2" stroke="#c8202a" stroke-width="1.600"/><path d="M7 6l8.500 5.500-3.500.6 2.400 3.800-1.600 1-2.400-3.900-2.400 2.500z" fill="#3b82e8" stroke="#1d4fb0" stroke-width=".700"/></svg>
<svg class="a" style="left:114px;top:157px" width="16" height="20" viewBox="0 0 16 20"><path d="M4.500 9V6a3.500 3.500 0 0 1 7 0v3" fill="none" stroke="#c8a22a" stroke-width="2"/><rect x="2" y="8.500" width="12" height="9.500" rx="1" fill="#e8c04a" stroke="#a8841a" stroke-width="1"/><path d="M3 11.500h10M3 14.500h10" stroke="#b8921e" stroke-width="1"/></svg>
<div class="" style="left:54px;top:181px;width:939px;height:224px;background:#fff;"></div>
<div class="" style="left:54px;top:181px;width:939px;height:24px;background:linear-gradient(#ffffff 0%,#ffffff 45%,#f3f4f6 55%,#f1f2f4 100%);border-bottom:1px solid #d5d5d5"></div>
<div class="" style="left:274px;top:181px;width:1px;height:24px;background:#e0e3e8"></div>
<div class="" style="left:394px;top:181px;width:1px;height:24px;background:#e0e3e8"></div>
<div class="" style="left:54px;top:206px;width:221px;height:39px;background:#f8f8f8"></div>
<span class="s" style="left:61px;top:185.5px;">Meldung</span>
<span class="s" style="left:281px;top:185.5px;">Tür</span>
<span class="s" style="left:400px;top:185.5px;">Richtung</span>
<div class="" style="left:911px;top:360px;width:24px;height:18px;background:#ececec"></div>
<div class="" style="left:911px;top:378px;width:24px;height:25px;background:#fbfbfb"></div>
<div class="" style="left:911px;top:403px;width:24px;height:8px;background:#a8d4f2"></div>
<div class="" style="left:911px;top:411px;width:24px;height:7px;background:#9a9a9a"></div>
<div class="" style="left:911px;top:418px;width:24px;height:28px;background:linear-gradient(#b4cae2,#cddcec);border-top:1px solid #5a6a7e"></div>
<div class="" style="left:921px;top:435px;width:11px;height:5px;background:#fff;border:1px solid #5a6a7e;border-radius:1px"></div>
<div class="" style="left:911px;top:446px;width:24px;height:27px;background:linear-gradient(#fdfdff 0%,#eceef8 30%,#d8dcee 65%,#dfe3f2 100%)"></div>
<div class="" style="left:911px;top:473px;width:24px;height:25px;background:linear-gradient(#ffffff 0%,#ffffff 45%,#f3f4f6 55%,#f1f2f4 100%);border-bottom:1px solid #d5d5d5"></div>
<div class="" style="left:911px;top:498px;width:24px;height:98px;background:#fff"></div>
<div class="" style="left:911px;top:596px;width:24px;height:30px;background:#ececec;border-top:1px solid #ccc"></div>
<div style="left:9px;top:243px;width:791px;height:763px;border:1px solid #1e252d;border-radius:7px 7px 2px 2px;background:linear-gradient(180deg,#a9cef2 0%,#a6c4e4 25%,#8aa3c0 60%,#7f97b3 100%);box-shadow:inset 0 0 0 1px rgba(255,255,255,.75);overflow:hidden;"><div style="left:1px;top:1px;right:1px;height:28px;width:787px;background:linear-gradient(90deg,#cfe6fa 0%,#dcedfb 5%,#c6e2fa 14%,#acd8fa 30%,#a6d5fa 100%)"></div><div style="left:6px;top:28px;width:777px;height:727px;border:1px solid rgba(255,255,255,.8);"></div></div>
<div style="left:16px;top:272px;width:777px;height:727px;border:1px solid #5c6b7c;background:#f0f0f0"></div>
<span class="s" style="left:17px;top:250px;text-shadow:0 0 5px #fff,0 0 8px #fff">Kontroller einstellen</span>
<div class="tabpage" style="left:28px;top:305px;width:752px;height:641px"></div>
<div class="tab sel" style="left:28px;top:284px;width:133px;height:22px"><span>Allgemeine Einstellungen</span></div>
<div class="tab" style="left:161px;top:286px;width:42px;height:19px"><span>Door 1</span></div>
<div class="tab" style="left:204px;top:286px;width:43px;height:19px"><span>Door 2</span></div>
<div class="tab" style="left:248px;top:286px;width:43px;height:19px"><span>Door 3</span></div>
<div class="tab" style="left:292px;top:286px;width:43px;height:19px"><span>Door 4</span></div>
<div class="tab" style="left:336px;top:286px;width:39px;height:19px"><span>Input</span></div>
<div class="grp" style="left:40px;top:325px;width:730px;height:210px"></div>
<span class="t gl" style="left:47px;top:318px;padding:0 2px">Allgemein</span>
<span class="t" style="left:50px;top:336px;">Kontroller Name :</span>
<div class="tb" style="left:217px;top:333px;width:176px;height:19px;line-height:17px;">Kontroller 1 im UG Keller</div>
<span class="t" style="left:50px;top:357px;">Kontroller ID :</span>
<div class="tb dis" style="left:217px;top:354px;width:60px;height:20px;line-height:18px;">1</div>
<span class="t" style="left:50px;top:421px;">GMT :</span>
<div class="cmb" style="left:217px;top:418px;width:33px;height:21px;line-height:19px"><span>+</span><b></b></div>
<div class="cmb" style="left:257px;top:418px;width:54px;height:21px;line-height:19px"><span>01</span><b></b></div>
<span class="t" style="left:319px;top:421px;">:</span>
<div class="cmb" style="left:329px;top:418px;width:54px;height:21px;line-height:19px"><span>00</span><b></b></div>
<span class="t" style="left:50px;top:448px;">Data Group:</span>
<div class="cmb" style="left:217px;top:445px;width:125px;height:21px;line-height:19px"><span>Data Group 1</span><b></b></div>
<div class="cb" style="left:50px;top:474px"><svg width="13" height="13" viewBox="0 0 13 13" style="position:absolute;left:-1px;top:-1px"><path d="M3 6.2 L5.2 9.5 L9.8 2.8" fill="none" stroke="#3a4c8a" stroke-width="1.8"/></svg></div>
<span class="t" style="left:66px;top:474px;">Release All Doors By Card</span>
<div class="cb" style="left:50px;top:506px"></div>
<span class="t" style="left:66px;top:505px;">Sommer-/Winterzeit aktivieren</span>
<div class="btn" style="left:218px;top:501px;width:97px;height:19px;line-height:17px">Einstellung</div>
<div class="grp" style="left:40px;top:548px;width:730px;height:174px"></div>
<span class="t gl" style="left:47px;top:541px;padding:0 2px">Verbindung</span>
<span class="t" style="left:64px;top:561px;">Netzwerk :</span>
<div class="cmb" style="left:217px;top:557px;width:125px;height:21px;line-height:19px"><span>TCP/IP</span><b></b></div>
<span class="t" style="left:64px;top:583px;">IP :</span>
<div class="tb foc" style="left:217px;top:582px;width:93px;height:20px;line-height:18px;">192.168.0.122</div>
<div class="" style="left:289px;top:585px;width:1px;height:14px;background:#000"></div>
<div class="magb" style="left:315px;top:581px"><svg width="19" height="19" viewBox="0 0 19 19" style="opacity:1"><circle cx="8" cy="8" r="5.2" fill="#f4f8fb" stroke="#8a8f96" stroke-width="1.4"/><path d="M12 12 L16 16" stroke="#d9a24a" stroke-width="2.6" stroke-linecap="round"/></svg></div>
<span class="t" style="left:64px;top:604px;">Port :</span>
<div class="tb" style="left:217px;top:603px;width:60px;height:19px;line-height:17px;">4000</div>
<span class="t" style="left:64px;top:647px;">Benutzer :</span>
<div class="tb" style="left:217px;top:645px;width:113px;height:20px;line-height:18px;"></div>
<span class="t" style="left:64px;top:669px;">Kennwort :</span>
<div class="tb" style="left:217px;top:666px;width:113px;height:20px;line-height:18px;"></div>
<span class="t" style="left:64px;top:691px;">Crypto Key :</span>
<div class="tb" style="left:217px;top:687px;width:113px;height:20px;line-height:18px;"></div>
<div style="left:454px;top:36px;width:457px;height:617px;border:1px solid #1b2027;border-radius:7px 7px 5px 5px;background:#7f98b6;box-shadow:inset 0 0 0 1px rgba(255,255,255,.6);overflow:hidden"><div style="left:1px;top:1px;width:453px;height:27px;background:linear-gradient(90deg,#c4d2e0 0%,#d5e0ea 8%,#c9d6e3 30%,#a9bbd0 45%,#8ea5c0 62%,#93a9c3 80%,#a3b6cc 100%)"></div><div style="left:1px;top:1px;width:453px;height:27px;background:linear-gradient(180deg,rgba(255,255,255,.25),rgba(255,255,255,0) 50%,rgba(60,80,110,.12))"></div><div style="left:449px;top:27px;width:6px;height:144px;background:linear-gradient(180deg,#a9bccf 0%,#bccbdb 60%,#c9d7e5 100%)"></div><div style="left:1px;top:27px;width:5px;height:144px;background:linear-gradient(180deg,#bccad9 0%,#c2d1e0 60%,#c8d7e6 100%)"></div><div style="left:1px;top:171px;width:5px;height:445px;background:linear-gradient(90deg,#7590b0 0%,#b4cce6 50%,#7f9ab8 100%)"></div><div style="left:1px;top:27px;width:1px;height:590px;background:rgba(255,255,255,.55)"></div><div style="left:453px;top:27px;width:1px;height:590px;background:rgba(255,255,255,.45)"></div></div>
<div class="" style="left:460px;top:64px;width:445px;height:583px;background:#e0e0e0;border:1px solid #4c5a6a;box-shadow:0 0 0 1px rgba(255,255,255,.35)"></div>
<div class="" style="left:461px;top:626px;width:443px;height:20px;background:#f0eeed;border-top:1px solid #9c9c9c;box-shadow:inset 0 1px 0 #fff"></div>
<svg class="a" style="left:462px;top:42px" width="16" height="16" viewBox="0 0 16 16"><path d="M2 4c0-2 10-2 10 0v8c0 2-10 2-10 0z" fill="#f3cf5c" stroke="#b58a18" stroke-width="1"/><ellipse cx="7" cy="4" rx="5" ry="1.700" fill="#fbe9a0" stroke="#b58a18" stroke-width=".800"/><rect x="6.500" y="8" width="8.500" height="7" fill="#555" stroke="#e8d9a0" stroke-width="1"/><path d="M8.500 13.500l2-4 2 4M11.500 10.500l2 3" stroke="#fff" stroke-width="1" fill="none"/></svg>
<span class="s" style="left:482px;top:42px;text-shadow:0 0 5px #fff,0 0 8px #fff,0 0 10px rgba(255,255,255,.8);letter-spacing:-0.08px">ASManager Database Setting</span>
<div class="" style="left:858px;top:36px;width:47px;height:19px;border:1px solid #3a1512;border-top:none;border-radius:0 0 5px 5px;background:linear-gradient(#e9b1a5 0%,#d97a68 45%,#c43c22 50%,#d7634a 100%);box-shadow:inset 0 0 0 1px rgba(255,255,255,.45)"><svg class="a" style="left:17px;top:3px" width="14" height="12" viewBox="0 0 14 12"><path d="M2.500 2 L11.500 10 M11.500 2 L2.500 10" stroke="#4a2a2a" stroke-width="4.200"/><path d="M2.500 2 L11.500 10 M11.500 2 L2.500 10" stroke="#fff" stroke-width="2.500"/></svg></div>
<div class="" style="left:472px;top:77px;width:71px;height:75px;background:#f0f0f0;border:1px solid #fff;border-right-color:#696969;border-bottom-color:#696969;box-shadow:inset -1px -1px 0 #a0a0a0"></div>
<svg class="a" style="left:475px;top:79px" width="64" height="64" viewBox="0 0 64 64"><defs><radialGradient id="mb" cx=".3" cy=".25" r=".9"><stop offset="0" stop-color="#f7e4da"/><stop offset=".55" stop-color="#edccc0"/><stop offset="1" stop-color="#e0ad9f"/></radialGradient></defs><rect x="1" y="1" width="62" height="62" fill="url(#mb)" stroke="#5e1410" stroke-width="2"/><defs><linearGradient id="cg2513" x1="0" x2="1"><stop offset="0" stop-color="#fdeeb0"/><stop offset=".45" stop-color="#f6c944"/><stop offset="1" stop-color="#fdeeb0"/></linearGradient></defs><path d="M25 18.28 v27.439999999999998 a16.5 5.28 0 0 0 33 0 v-27.439999999999998 z" fill="url(#cg2513)" stroke="#c8962a" stroke-width=".800"/><ellipse cx="41.5" cy="18.28" rx="16.5" ry="5.28" fill="#fdeeb0" stroke="#c8962a" stroke-width=".800"/><path d="M12 3v16M4 11h16M6.300 5.300l11.400 11.400M17.700 5.300L6.300 16.700" stroke="#f4b81c" stroke-width="2.800"/><circle cx="12" cy="11" r="3" fill="#fbe27a"/><rect x="11" y="25" width="20" height="17" fill="#fffff0" stroke="#111" stroke-width="1.200"/><rect x="14" y="28" width="14" height="11" fill="#0a1020"/><circle cx="21" cy="33.500" r="4.200" fill="none" stroke="#5a9ae8" stroke-width="1"/><path d="M16.800 33.500h8.400M21 29.300v8.400M19 29.800v7.400M23 29.800v7.400" stroke="#5a9ae8" stroke-width=".700"/><path d="M17 42h8v3h-8z" fill="#fffff0" stroke="#111" stroke-width="1"/><rect x="7" y="49" width="27" height="7" fill="#fffff0" stroke="#111" stroke-width="1.200"/><path d="M24 52.500h7" stroke="#111" stroke-width="1.500"/><path d="M10 51v3M12 51v3M14 51v3" stroke="#aaa" stroke-width=".800"/><rect x="39" y="42" width="17" height="12" fill="#8e1a12"/><text x="40" y="52.5" font-family="Liberation Sans" font-size="11.500" fill="#fff" letter-spacing="-.5">AS</text></svg>
<div class="" style="left:548px;top:76px;width:345px;height:73px;background:#e0e0e0;border:1px solid #a0a0a0;border-right-color:#fff;border-bottom-color:#fff"></div>
<span class="t nv" style="left:554px;top:84px;">Setup MDB / MSSQL Database for ASManager</span>
<div class="" style="left:472px;top:167px;width:71px;height:75px;background:#f0f0f0;border:1px solid #fff;border-right-color:#696969;border-bottom-color:#696969;box-shadow:inset -1px -1px 0 #a0a0a0"></div>
<svg class="a" style="left:475px;top:169px" width="64" height="64" viewBox="0 0 64 64"><defs><radialGradient id="mg" cx=".3" cy=".25" r=".9"><stop offset="0" stop-color="#e6e6e6"/><stop offset=".6" stop-color="#d2d2d2"/><stop offset="1" stop-color="#bdbdbd"/></radialGradient></defs><rect x="1" y="1" width="62" height="62" fill="url(#mg)" stroke="#151515" stroke-width="2"/><defs><linearGradient id="cg1212" x1="0" x2="1"><stop offset="0" stop-color="#f8f8f8"/><stop offset=".45" stop-color="#dcdcdc"/><stop offset="1" stop-color="#f8f8f8"/></linearGradient></defs><path d="M12 17.44 v30.119999999999997 a17.0 5.44 0 0 0 34 0 v-30.119999999999997 z" fill="url(#cg1212)" stroke="#6e6e6e" stroke-width=".800"/><ellipse cx="29.0" cy="17.44" rx="17.0" ry="5.44" fill="#f8f8f8" stroke="#6e6e6e" stroke-width=".800"/><rect x="8" y="24" width="17" height="12" fill="#2a2a2a"/><text x="9" y="34.5" font-family="Liberation Sans" font-size="11.500" fill="#fff" letter-spacing="-.5">AS</text><g fill="none"><path d="M53.300 43.200A11 11 0 0 0 32 47" stroke="#7e7e7e" stroke-width="8.200"/><path d="M35.200 54.800A11 11 0 0 0 54 47" stroke="#7e7e7e" stroke-width="8.200"/></g><path d="M24 46h16l-8 10.500z" fill="#e2e2e2" stroke="#7e7e7e" stroke-width="1.100"/><path d="M46 48h16l-8-10.500z" fill="#bdbdbd" stroke="#7e7e7e" stroke-width="1.100"/><g fill="none"><path d="M53.300 43.200A11 11 0 0 0 32 47.300" stroke="#e2e2e2" stroke-width="6"/><path d="M35.200 54.800A11 11 0 0 0 54 46.700" stroke="#bdbdbd" stroke-width="6"/></g></svg>
<div class="" style="left:548px;top:166px;width:345px;height:73px;background:#e0e0e0;border:1px solid #a0a0a0;border-right-color:#fff;border-bottom-color:#fff"></div>
<span class="t nv" style="left:554px;top:173.5px;">Upgrade to latest database version</span>
<div class="" style="left:472px;top:256px;width:71px;height:75px;background:#f0f0f0;border:1px solid #fff;border-right-color:#696969;border-bottom-color:#696969;box-shadow:inset -1px -1px 0 #a0a0a0"></div>
<svg class="a" style="left:475px;top:258px" width="64" height="64" viewBox="0 0 64 64"><defs><radialGradient id="mb" cx=".3" cy=".25" r=".9"><stop offset="0" stop-color="#f7e4da"/><stop offset=".55" stop-color="#edccc0"/><stop offset="1" stop-color="#e0ad9f"/></radialGradient></defs><rect x="1" y="1" width="62" height="62" fill="url(#mb)" stroke="#5e1410" stroke-width="2"/><defs><linearGradient id="cg1917" x1="0" x2="1"><stop offset="0" stop-color="#fdeeb0"/><stop offset=".45" stop-color="#f6c944"/><stop offset="1" stop-color="#fdeeb0"/></linearGradient></defs><path d="M19 22.12 v29.759999999999998 a16.0 5.12 0 0 0 32 0 v-29.759999999999998 z" fill="url(#cg1917)" stroke="#c8962a" stroke-width=".800"/><ellipse cx="35.0" cy="22.12" rx="16.0" ry="5.12" fill="#fdeeb0" stroke="#c8962a" stroke-width=".800"/><defs><linearGradient id="xg" x1="0" y1="0" x2="1" y2="1"><stop offset="0" stop-color="#fcc04c"/><stop offset="1" stop-color="#ee7410"/></linearGradient></defs><g transform="translate(20,20) rotate(45)"><path d="M-14-4.500h9.500v-9.500h9v9.500h9.500v9h-9.500v9.500h-9v-9.500h-9.500z" fill="url(#xg)" stroke="#b4560a" stroke-width="1.300"/></g><rect x="32" y="40" width="17" height="12" fill="#8e1a12"/><text x="33" y="50.5" font-family="Liberation Sans" font-size="11.500" fill="#fff" letter-spacing="-.5">AS</text></svg>
<div class="" style="left:548px;top:255px;width:345px;height:73px;background:#e0e0e0;border:1px solid #a0a0a0;border-right-color:#fff;border-bottom-color:#fff"></div>
<span class="t nv" style="left:554px;top:262.5px;">Delete ASManager Database</span>
<div class="" style="left:472px;top:346px;width:71px;height:75px;background:#f0f0f0;border:1px solid #fff;border-right-color:#696969;border-bottom-color:#696969;box-shadow:inset -1px -1px 0 #a0a0a0"></div>
<svg class="a" style="left:475px;top:348px" width="64" height="64" viewBox="0 0 64 64"><defs><radialGradient id="mb" cx=".3" cy=".25" r=".9"><stop offset="0" stop-color="#f7e4da"/><stop offset=".55" stop-color="#edccc0"/><stop offset="1" stop-color="#e0ad9f"/></radialGradient></defs><rect x="1" y="1" width="62" height="62" fill="url(#mb)" stroke="#5e1410" stroke-width="2"/><defs><linearGradient id="cg67" x1="0" x2="1"><stop offset="0" stop-color="#fdeeb0"/><stop offset=".45" stop-color="#f6c944"/><stop offset="1" stop-color="#fdeeb0"/></linearGradient></defs><path d="M6 11.32 v24.36 a13.5 4.32 0 0 0 27 0 v-24.36 z" fill="url(#cg67)" stroke="#c8962a" stroke-width=".800"/><ellipse cx="19.5" cy="11.32" rx="13.5" ry="4.32" fill="#fdeeb0" stroke="#c8962a" stroke-width=".800"/><rect x="5.5" y="16" width="17" height="12" fill="#8e1a12"/><text x="6.5" y="26.5" font-family="Liberation Sans" font-size="11.500" fill="#fff" letter-spacing="-.5">AS</text><path d="M29 19 h23 l8 8 v32 h-31 z" fill="#fbfbfb" stroke="#8e8e8e" stroke-width=".900"/><path d="M52 19 v8 h8" fill="#dcdcdc" stroke="#8e8e8e" stroke-width=".800"/><rect x="32" y="29" width="25" height="10" fill="#dff0fa"/><path d="M32 29h25M32 34h25M32 39h25M32 47h25M32 51h25M32 55h25M32 29v26M38 29v26M44.5 29v26M51 29v26M57 29v26" stroke="#b9c6cf" stroke-width=".800"/><text x="32.5" y="46" font-family="Liberation Serif" font-weight="bold" font-size="15" fill="#1a1078" stroke="#1a1078" stroke-width=".300" textLength="27" lengthAdjust="spacingAndGlyphs">MDB</text><path d="M9 43h13v-4.500l11 8.500-11 8.500v-4.500H9z" fill="#4aa83a" stroke="#1e6a18" stroke-width="1.200"/></svg>
<div class="" style="left:548px;top:345px;width:345px;height:73px;background:#e0e0e0;border:1px solid #a0a0a0;border-right-color:#fff;border-bottom-color:#fff"></div>
<span class="t nv" style="left:554px;top:352.5px;">Backup Database</span>
<div class="" style="left:472px;top:435px;width:71px;height:75px;background:#f0f0f0;border:1px solid #fff;border-right-color:#696969;border-bottom-color:#696969;box-shadow:inset -1px -1px 0 #a0a0a0"></div>
<svg class="a" style="left:475px;top:437px" width="64" height="64" viewBox="0 0 64 64"><defs><radialGradient id="mb" cx=".3" cy=".25" r=".9"><stop offset="0" stop-color="#f7e4da"/><stop offset=".55" stop-color="#edccc0"/><stop offset="1" stop-color="#e0ad9f"/></radialGradient></defs><rect x="1" y="1" width="62" height="62" fill="url(#mb)" stroke="#5e1410" stroke-width="2"/><defs><linearGradient id="cg67" x1="0" x2="1"><stop offset="0" stop-color="#fdeeb0"/><stop offset=".45" stop-color="#f6c944"/><stop offset="1" stop-color="#fdeeb0"/></linearGradient></defs><path d="M6 11.32 v24.36 a13.5 4.32 0 0 0 27 0 v-24.36 z" fill="url(#cg67)" stroke="#c8962a" stroke-width=".800"/><ellipse cx="19.5" cy="11.32" rx="13.5" ry="4.32" fill="#fdeeb0" stroke="#c8962a" stroke-width=".800"/><rect x="5.5" y="16" width="17" height="12" fill="#8e1a12"/><text x="6.5" y="26.5" font-family="Liberation Sans" font-size="11.500" fill="#fff" letter-spacing="-.5">AS</text><path d="M29 19 h23 l8 8 v32 h-31 z" fill="#fbfbfb" stroke="#8e8e8e" stroke-width=".900"/><path d="M52 19 v8 h8" fill="#dcdcdc" stroke="#8e8e8e" stroke-width=".800"/><rect x="32" y="29" width="25" height="10" fill="#dff0fa"/><path d="M32 29h25M32 34h25M32 39h25M32 47h25M32 51h25M32 55h25M32 29v26M38 29v26M44.5 29v26M51 29v26M57 29v26" stroke="#b9c6cf" stroke-width=".800"/><text x="32.5" y="46" font-family="Liberation Serif" font-weight="bold" font-size="15" fill="#1a1078" stroke="#1a1078" stroke-width=".300" textLength="27" lengthAdjust="spacingAndGlyphs">MDB</text><path d="M34 43.500H21v-4.500L10 47.500 21 56v-4.500h13z" fill="#4aa83a" stroke="#1e6a18" stroke-width="1.200"/></svg>
<div class="" style="left:548px;top:434px;width:345px;height:73px;background:#e0e0e0;border:1px solid #a0a0a0;border-right-color:#fff;border-bottom-color:#fff"></div>
<span class="t nv" style="left:554px;top:441.5px;">Recovery Database</span>
<div class="" style="left:472px;top:523px;width:71px;height:75px;background:#f0f0f0;border:1px solid #fff;border-right-color:#696969;border-bottom-color:#696969;box-shadow:inset -1px -1px 0 #a0a0a0"></div>
<svg class="a" style="left:475px;top:525px" width="64" height="64" viewBox="0 0 64 64"><defs><radialGradient id="mb" cx=".3" cy=".25" r=".9"><stop offset="0" stop-color="#f7e4da"/><stop offset=".55" stop-color="#edccc0"/><stop offset="1" stop-color="#e0ad9f"/></radialGradient></defs><rect x="1" y="1" width="62" height="62" fill="url(#mb)" stroke="#5e1410" stroke-width="2"/><defs><linearGradient id="cg811" x1="0" x2="1"><stop offset="0" stop-color="#fdeeb0"/><stop offset=".45" stop-color="#f6c944"/><stop offset="1" stop-color="#fdeeb0"/></linearGradient></defs><path d="M8 16.12 v29.759999999999998 a16.0 5.12 0 0 0 32 0 v-29.759999999999998 z" fill="url(#cg811)" stroke="#c8962a" stroke-width=".800"/><ellipse cx="24.0" cy="16.12" rx="16.0" ry="5.12" fill="#fdeeb0" stroke="#c8962a" stroke-width=".800"/><rect x="10" y="23" width="17" height="12" fill="#8e1a12"/><text x="11" y="33.5" font-family="Liberation Sans" font-size="11.500" fill="#fff" letter-spacing="-.5">AS</text><rect x="30" y="36" width="16" height="14" rx="1.500" fill="#f2c24a" stroke="#b58a18" stroke-width="1"/><path d="M33 41h10M33 45h10" stroke="#fbe9a0" stroke-width="2"/><path d="M40 32h17v5h-5v18h5v4H44v-4" fill="none" stroke="#8fb0d8" stroke-width="2.600"/><path d="M49 38v16" stroke="#8fb0d8" stroke-width="4" stroke-dasharray="1.500 1.500"/><circle cx="47" cy="59" r="2" fill="#6f8fb8"/><circle cx="57" cy="59" r="2" fill="#6f8fb8"/></svg>
<div class="" style="left:548px;top:522px;width:345px;height:73px;background:#e0e0e0;border:1px solid #a0a0a0;border-right-color:#fff;border-bottom-color:#fff"></div>
<span class="t nv" style="left:554px;top:529.5px;">Compact Database</span>
<div class="btn" style="left:794px;top:389px;width:93px;height:22px;line-height:17.0px">Schedule</div>
<div class="btn" style="left:794px;top:567px;width:93px;height:22px;line-height:17.0px">Schedule</div>
<div style="left:929px;top:-22px;width:828px;height:766px;border:1px solid #1e252d;border-radius:7px 7px 3px 3px;background:#7f98b6;box-shadow:inset 0 0 0 1px rgba(255,255,255,.8);overflow:hidden"><div style="left:1px;top:1px;width:824px;height:30px;background:linear-gradient(90deg,#cfe2f6 0%,#b4d5f6 20%,#a4ccf4 55%,#c4dcf4 90%,#d4e4f4 100%)"></div><div style="left:1px;top:30px;width:5px;height:730px;background:linear-gradient(180deg,#c4dcf6 0%,#c8dff6 28%,rgba(200,223,246,0) 29%),linear-gradient(90deg,#7a98be 0%,#b4d0ee 50%,#7f9cc2 100%)"></div><div style="left:820px;top:30px;width:5px;height:730px;background:linear-gradient(180deg,#cfe2f6 0%,#d8e8f8 24%,#b4d0ec 25%,#b0cdea 62%,#7f98b6 65%,#7f98b6 100%)"></div><div style="left:1px;top:1px;width:1px;height:762px;background:rgba(255,255,255,.8)"></div><div style="left:824px;top:1px;width:1px;height:762px;background:rgba(255,255,255,.7)"></div><div style="left:3px;top:30px;width:1px;height:730px;background:rgba(255,255,255,.35)"></div><div style="left:822px;top:30px;width:1px;height:730px;background:rgba(255,255,255,.3)"></div></div>
<div class="" style="left:935px;top:10px;width:815px;height:727px;background:#f0f0f0;border:1px solid #5c6b7c;box-shadow:0 0 0 1px rgba(255,255,255,.8)"></div>
<div class="tabpage" style="left:948px;top:42px;width:791px;height:643px"></div>
<div class="tab" style="left:949px;top:24px;width:128px;height:18px"><span>Allgemeine Einstellungen</span></div>
<div class="tab sel" style="left:1076px;top:22px;width:48px;height:21px"><span>Door 1</span></div>
<div class="tab" style="left:1124px;top:24px;width:42px;height:18px"><span>Door 2</span></div>
<div class="tab" style="left:1167px;top:24px;width:43px;height:18px"><span>Door 3</span></div>
<div class="tab" style="left:1211px;top:24px;width:43px;height:18px"><span>Door 4</span></div>
<div class="tab" style="left:1255px;top:24px;width:39px;height:18px"><span>Input</span></div>
<div class="grp" style="left:960px;top:63px;width:764px;height:605px"></div>
<div class="" style="left:966px;top:56px;width:105px;height:15px;background:#f0f0f0"></div>
<div class="cb" style="left:969px;top:57px"><svg width="13" height="13" viewBox="0 0 13 13" style="position:absolute;left:-1px;top:-1px"><path d="M3 6.2 L5.2 9.5 L9.8 2.8" fill="none" stroke="#3a4c8a" stroke-width="1.8"/></svg></div>
<span class="t" style="left:985px;top:56.5px;">Monitor</span>
<span class="t" style="left:975px;top:81px;">Name:</span>
<div class="tb" style="left:1199px;top:81px;width:152px;height:19px;line-height:17px;">Haupteingang</div>
<span class="t" style="left:975px;top:106px;">Common Password :</span>
<div class="tb" style="left:1199px;top:107px;width:66px;height:19px;line-height:17px;"></div>
<div class="" style="left:1203px;top:114px;width:6px;height:6px;background:#000;border-radius:50%"></div>
<div class="" style="left:1210px;top:114px;width:6px;height:6px;background:#000;border-radius:50%"></div>
<div class="" style="left:1217px;top:114px;width:6px;height:6px;background:#000;border-radius:50%"></div>
<div class="" style="left:1224px;top:114px;width:6px;height:6px;background:#000;border-radius:50%"></div>
<span class="t" style="left:1274px;top:107px;">4~8 Ziffer(0~9)</span>
<div class="cb" style="left:975px;top:132px"></div>
<span class="t" style="left:991px;top:132px;">Urgent Code :</span>
<div class="tb dis" style="left:1199px;top:133px;width:66px;height:19px;line-height:17px;"></div>
<span class="t g" style="left:1274px;top:133px;">4~8 digits(0~9)</span>
<span class="t" style="left:975px;top:159px;">Speerzeit :</span>
<div class="tb" style="left:1199px;top:159px;width:45px;height:19px;line-height:17px;">5</div>
<span class="t" style="left:1256px;top:159.5px;">Sek.(1~600)</span>
<div class="tb" style="left:1199px;top:180px;width:45px;height:19px;line-height:17px;">5</div>
<span class="t" style="left:1256px;top:181.5px;">(Handicap Card)</span>
<span class="t" style="left:975px;top:208px;">Offen-Haltezeit :</span>
<div class="tb" style="left:1199px;top:206px;width:51px;height:19px;line-height:17px;">10</div>
<span class="t" style="left:1256px;top:207.5px;">Sek.(0~9999)</span>
<div class="tb" style="left:1199px;top:227px;width:51px;height:19px;line-height:17px;">10</div>
<span class="t" style="left:1256px;top:229px;">(Handicap Card)</span>
<span class="t" style="left:975px;top:255px;">Lock Card Time:</span>
<span class="t" style="right:731px;top:255px;">Entrance:</span>
<div class="tb" style="left:1199px;top:253px;width:51px;height:19px;line-height:17px;">0</div>
<span class="t" style="left:1256px;top:255px;">Sek.(0~65535)</span>
<span class="t" style="right:731px;top:276px;">Abbrechen:</span>
<div class="tb" style="left:1199px;top:274px;width:51px;height:19px;line-height:17px;">0</div>
<span class="t" style="left:1256px;top:276px;">Sek.(0~65535)</span>
<span class="t" style="left:975px;top:302px;">Feuer Aktion :</span>
<div class="cmb" style="left:1199px;top:302px;width:183px;height:21px;line-height:19px"><span>Nicht ändern</span><b></b></div>
<div class="grp" style="left:975px;top:335px;width:212px;height:56px"></div>
<span class="t gl" style="left:982px;top:329px;padding:0 2px">Reader's Keypad</span>
<div class="cb" style="left:984px;top:348px"><svg width="13" height="13" viewBox="0 0 13 13" style="position:absolute;left:-1px;top:-1px"><path d="M3 6.2 L5.2 9.5 L9.8 2.8" fill="none" stroke="#3a4c8a" stroke-width="1.8"/></svg></div>
<span class="t" style="left:1000px;top:348px;">Entrance</span>
<div class="cb" style="left:984px;top:370px"><svg width="13" height="13" viewBox="0 0 13 13" style="position:absolute;left:-1px;top:-1px"><path d="M3 6.2 L5.2 9.5 L9.8 2.8" fill="none" stroke="#3a4c8a" stroke-width="1.8"/></svg></div>
<span class="t" style="left:1000px;top:369px;">Abbrechen</span>
<div class="grp" style="left:975px;top:402px;width:212px;height:126px"></div>
<span class="t gl" style="left:982px;top:396px;padding:0 2px">GeoFinger</span>
<div class="cb" style="left:984px;top:416px"></div>
<span class="t" style="left:1000px;top:415px;">Entrance</span>
<div class="tb dis" style="left:996px;top:437px;width:98px;height:19px;line-height:17px;">IP Adresse...</div>
<span class="t" style="left:1102px;top:440px;">:</span>
<div class="tb dis" style="left:1115px;top:437px;width:42px;height:19px;line-height:17px;">2167</div>
<div class="magb" style="left:1162px;top:436px"><svg width="19" height="19" viewBox="0 0 19 19" style="opacity:0.55"><circle cx="8" cy="8" r="5.2" fill="#f4f8fb" stroke="#8a8f96" stroke-width="1.4"/><path d="M12 12 L16 16" stroke="#d9a24a" stroke-width="2.6" stroke-linecap="round"/></svg></div>
<div class="cb" style="left:984px;top:470px"></div>
<span class="t" style="left:1000px;top:469px;">Abbrechen</span>
<div class="tb dis" style="left:996px;top:490px;width:98px;height:19px;line-height:17px;">IP Adresse...</div>
<span class="t" style="left:1102px;top:493px;">:</span>
<div class="tb dis" style="left:1115px;top:490px;width:42px;height:19px;line-height:17px;">2167</div>
<div class="magb" style="left:1162px;top:490px"><svg width="19" height="19" viewBox="0 0 19 19" style="opacity:0.55"><circle cx="8" cy="8" r="5.2" fill="#f4f8fb" stroke="#8a8f96" stroke-width="1.4"/><path d="M12 12 L16 16" stroke="#d9a24a" stroke-width="2.6" stroke-linecap="round"/></svg></div>
<div class="grp" style="left:975px;top:539px;width:212px;height:122px"></div>
<span class="t gl" style="left:982px;top:533px;padding:0 2px">GeoFace</span>
<div class="cb" style="left:984px;top:552px"></div>
<span class="t" style="left:1000px;top:551px;">Entrance</span>
<div class="tb dis" style="left:996px;top:574px;width:98px;height:19px;line-height:17px;">IP Adresse...</div>
<span class="t" style="left:1102px;top:576px;">:</span>
<div class="tb dis" style="left:1115px;top:574px;width:42px;height:19px;line-height:17px;">5005</div>
<div class="magb" style="left:1162px;top:573px"><svg width="19" height="19" viewBox="0 0 19 19" style="opacity:0.55"><circle cx="8" cy="8" r="5.2" fill="#f4f8fb" stroke="#8a8f96" stroke-width="1.4"/><path d="M12 12 L16 16" stroke="#d9a24a" stroke-width="2.6" stroke-linecap="round"/></svg></div>
<div class="cb" style="left:984px;top:606px"></div>
<span class="t" style="left:1000px;top:605px;">Abbrechen</span>
<div class="grp" style="left:1196px;top:335px;width:240px;height:95px"></div>
<span class="t gl" style="left:1203px;top:329px;padding:0 2px">Anti-Passback</span>
<div class="rd" style="left:1205px;top:348px"><i></i></div>
<span class="t" style="left:1221px;top:347px;">Kein</span>
<div class="rd" style="left:1205px;top:367px"></div>
<span class="t" style="left:1221px;top:366px;">By Card - Local</span>
<div class="rd" style="left:1205px;top:388px"></div>
<span class="t" style="left:1221px;top:387px;">By Card - Global</span>
<div class="rd" style="left:1205px;top:409px"></div>
<span class="t" style="left:1221px;top:408px;">By User - Local</span>
<div class="grp" style="left:1196px;top:443px;width:240px;height:58px"></div>
<span class="t gl" style="left:1203px;top:437px;padding:0 2px">Auto Check Out</span>
<div class="cb" style="left:1205px;top:456px"></div>
<span class="t" style="left:1221px;top:456px;">Entrance</span>
<div class="cb" style="left:1205px;top:478px"></div>
<span class="t" style="left:1221px;top:477px;">Abbrechen</span>
<div class="grp" style="left:1196px;top:511px;width:240px;height:58px"></div>
<span class="t gl" style="left:1203px;top:505px;padding:0 2px">Two-Person Rule</span>
<div class="cb" style="left:1205px;top:524px"></div>
<span class="t" style="left:1221px;top:524px;">Entrance</span>
<div class="cb" style="left:1205px;top:546px"></div>
<span class="t" style="left:1221px;top:545px;">Abbrechen</span>
<div class="grp" style="left:1196px;top:579px;width:240px;height:53px"></div>
<span class="t gl" style="left:1203px;top:573px;padding:0 2px">Interne Zone</span>
<div class="tb" style="left:1209px;top:598px;width:192px;height:22px;line-height:20px;background:#f0f0f0;border-color:#e4e4e4"></div>
<div class="" style="left:1410px;top:597px;width:18px;height:24px;border:1px solid #707070;border-radius:3px;background:linear-gradient(#f2f2f2 0%,#ebebeb 48%,#dddddd 52%,#cfcfcf 100%);box-shadow:inset 0 0 0 1px rgba(255,255,255,.8)"><div style="left:4px;top:9px;width:0;height:0;border-left:4px solid transparent;border-right:4px solid transparent;border-top:4px solid #000"></div></div>
<div class="grp" style="left:1448px;top:82px;width:260px;height:211px"></div>
<span class="t gl" style="left:1455px;top:75px;padding:0 2px">Alarmereignis</span>
<div class="cb" style="left:1455px;top:93px"></div>
<span class="t" style="left:1471px;top:92.5px;">Offen-Halte</span>
<div class="cb" style="left:1455px;top:113px"></div>
<span class="t" style="left:1471px;top:112.5px;">Zwang-Öffnen</span>
<div class="cb" style="left:1455px;top:132px"></div>
<span class="t" style="left:1471px;top:132px;">verpfuschen</span>
<div class="cb" style="left:1455px;top:152px"></div>
<span class="t" style="left:1471px;top:152px;">Feueralarm</span>
<div class="cb" style="left:1455px;top:172px"></div>
<span class="t" style="left:1471px;top:171px;">Zutritt verweigert</span>
<div class="cb" style="left:1455px;top:226px"></div>
<span class="t" style="left:1471px;top:226px;">Tailgating</span>
<div class="cb" style="left:1455px;top:246px"></div>
<span class="t" style="left:1471px;top:246px;">Urgent Code</span>
<span class="t g" style="left:1478px;top:186px;">Alarmierungsdauer :</span>
<div class="tb dis" style="left:1478px;top:203px;width:51px;height:19px;line-height:17px;">5</div>
<span class="t g" style="left:1535px;top:206px;">Sek.(1~10)</span>
<div class="grp" style="left:1448px;top:306px;width:260px;height:216px"></div>
<span class="t gl" style="left:1455px;top:299px;padding:0 2px">Kamera Mapping</span>
<span class="t" style="left:1462px;top:321px;">Camera 1 :</span>
<div class="cmb" style="left:1477px;top:340px;width:195px;height:22px;line-height:20px"><span>Kein</span><b></b></div>
<div class="" style="left:1680px;top:340px;width:21px;height:22px;border:1px solid #c0c0c0;border-radius:3px;background:linear-gradient(#f8f8f8,#e8e8e8)"><svg class="a" style="left:2px;top:3px" width="16" height="15" viewBox="0 0 16 15"><rect x="1" y="3" width="10" height="10" fill="#e9edf2" stroke="#9aa3ad" stroke-width="1"/><path d="M3.500 5.500h5M6 5.500v6" stroke="#9aa3ad" stroke-width="1.400"/><circle cx="11.500" cy="3.500" r="2.500" fill="#a9b7c6"/></svg></div>
<span class="t" style="left:1476px;top:370px;">Delayed snapshot:</span>
<div class="tb dis" style="left:1477px;top:388px;width:50px;height:20px;line-height:18px;">0</div>
<span class="t" style="left:1532px;top:391px;">Sek.(0~60)</span>
<span class="t" style="left:1462px;top:422px;">Camera 2 :</span>
<div class="cmb" style="left:1477px;top:441px;width:195px;height:22px;line-height:20px"><span>Kein</span><b></b></div>
<div class="" style="left:1680px;top:441px;width:21px;height:22px;border:1px solid #c0c0c0;border-radius:3px;background:linear-gradient(#f8f8f8,#e8e8e8)"><svg class="a" style="left:2px;top:3px" width="16" height="15" viewBox="0 0 16 15"><rect x="1" y="3" width="10" height="10" fill="#e9edf2" stroke="#9aa3ad" stroke-width="1"/><path d="M3.500 5.500h5M6 5.500v6" stroke="#9aa3ad" stroke-width="1.400"/><circle cx="11.500" cy="3.500" r="2.500" fill="#a9b7c6"/></svg></div>
<span class="t" style="left:1476px;top:471px;">Delayed snapshot:</span>
<div class="tb dis" style="left:1477px;top:489px;width:50px;height:20px;line-height:18px;">0</div>
<span class="t" style="left:1532px;top:492px;">Sek.(0~60)</span>
<div class="btn def" style="left:1449px;top:534px;width:169px;height:19px;line-height:17px">Authentifizierung-Terminplanung</div>
<div class="" style="left:1622px;top:534px;width:20px;height:17px;border:1px solid #000;background:linear-gradient(135deg,#b4b4b4,#8c8c8c)"><svg class="a" style="left:0px;top:0px" width="18" height="15" viewBox="0 0 18 15"><path d="M1.500 5.500h3.500l2.500-3h8.500l1 2-4.500 1.200 2.800.3v1.800h-3l2 .5v1.700h-2.500l1.200.6v1.600H6.500l-2-1.200H1.500z" fill="#28b4bc" stroke="#0a4a50" stroke-width="1"/><path d="M3 6.500h2.500l2-2.500h6" stroke="#8ae8ec" stroke-width="1" fill="none"/></svg></div>
<div class="btn" style="left:1449px;top:564px;width:169px;height:19px;line-height:17px">Exit Button Schedule</div>
<div class="" style="left:1622px;top:565px;width:20px;height:17px;border:1px solid #000;background:linear-gradient(135deg,#b4b4b4,#8c8c8c)"><svg class="a" style="left:0px;top:0px" width="18" height="15" viewBox="0 0 18 15"><path d="M1.500 5.500h3.500l2.500-3h8.500l1 2-4.500 1.200 2.800.3v1.800h-3l2 .5v1.700h-2.500l1.200.6v1.600H6.500l-2-1.200H1.500z" fill="#28b4bc" stroke="#0a4a50" stroke-width="1"/><path d="M3 6.500h2.500l2-2.500h6" stroke="#8ae8ec" stroke-width="1" fill="none"/></svg></div>
<div class="btn" style="left:1578px;top:703px;width:73px;height:21px;line-height:19px">OK</div>
<div class="btn" style="left:1666px;top:703px;width:73px;height:21px;line-height:19px">Abbrechen</div>
<div class="" style="left:1704px;top:0px;width:44px;height:2px;background:linear-gradient(#3a1410,#6a2a22);border-radius:0 0 3px 3px"></div>
<div style="left:610px;top:626px;width:752px;height:430px;border:1px solid #3c4854;border-radius:7px 7px 2px 2px;background:linear-gradient(180deg,#c2daf3 0%,#bdd6f0 15%,#b7d0ec 50%,#a8c4e4 100%);box-shadow:inset 0 0 0 1px rgba(255,255,255,.8);overflow:hidden"><div style="left:1px;top:1px;width:748px;height:27px;background:linear-gradient(90deg,#c9def4 0%,#c4dbf3 18%,#b0cff0 35%,#a8caef 55%,#b5d1f0 75%,#cfdff2 92%,#d6e3f2 100%)"></div><div style="left:1px;top:60px;width:5px;height:380px;background:linear-gradient(180deg,#c2daf3 0%,#a4c6ee 30%,#9fc3ee 100%)"></div><div style="left:745px;top:90px;width:5px;height:350px;background:linear-gradient(180deg,#c2daf3 0%,#a4c6ee 30%,#9fc3ee 100%)"></div></div>
<div class="" style="left:617px;top:654px;width:738px;height:383px;background:#f0f0f0;border:1px solid #5c6b7c;box-shadow:0 0 0 1px rgba(255,255,255,.85)"></div>
<span class="s" style="left:618px;top:632px;text-shadow:0 0 5px #fff,0 0 9px #fff;letter-spacing:0.22px">Authentifizierung-Terminplanung</span>
<svg class="a" style="left:630px;top:657px" width="18" height="18" viewBox="0 0 18 18"><path d="M1.500 1h14l-1.500 4h-11z" fill="#f7e8e0" stroke="#8a2a12" stroke-width="1"/><path d="M4 1v3M6.500 1v3M9 1v3M11.500 1v3M14 1v3" stroke="#8a2a12" stroke-width=".800"/><circle cx="7.500" cy="8" r="4.300" fill="#dcebfb" stroke="#3a7ad0" stroke-width="2.200"/><path d="M5 8h5M7.500 5.500v5" stroke="#e8761a" stroke-width="1.700"/><path d="M11.500 12l4 4.500" stroke="#4a8ad8" stroke-width="2.600" stroke-linecap="round"/></svg>
<div class="" style="left:651px;top:656px;width:24px;height:20px;border:1px solid #6a6a6a;border-radius:3px;background:linear-gradient(#e4e4e4,#d0d0d0)"></div>
<svg class="a" style="left:654px;top:657px" width="18" height="18" viewBox="0 0 18 18"><path d="M1.500 1h14l-1.500 4h-11z" fill="#f7e8e0" stroke="#8a2a12" stroke-width="1"/><path d="M4 1v3M6.500 1v3M9 1v3M11.500 1v3M14 1v3" stroke="#8a2a12" stroke-width=".800"/><circle cx="7.500" cy="8" r="4.300" fill="#dcebfb" stroke="#3a7ad0" stroke-width="2.200"/><path d="M5 8h5" stroke="#e8761a" stroke-width="1.900"/><path d="M11.500 12l4 4.500" stroke="#4a8ad8" stroke-width="2.600" stroke-linecap="round"/></svg>
<div class="" style="left:676px;top:657px;width:1px;height:18px;background:#a0a0a0"></div>
<div class="" style="left:677px;top:657px;width:1px;height:18px;background:#fff"></div>
<div class="" style="left:685px;top:658px;width:16px;height:16px;background:#0049d2"></div>
<div class="" style="left:708px;top:658px;width:16px;height:16px;background:#ee7f0f"></div>
<div class="" style="left:728px;top:656px;width:23px;height:20px;border:1px solid #6a6a6a;border-radius:3px;background:linear-gradient(#e4e4e4,#d0d0d0)"></div>
<div class="" style="left:732px;top:658px;width:16px;height:16px;background:#37bb0e"></div>
<div class="" style="left:754px;top:658px;width:16px;height:16px;background:#ebd911"></div>
<div class="" style="left:628px;top:682px;width:716px;height:240px;background:#fff;border:1px solid #000"></div>
<div class="" style="left:737px;top:682px;width:1px;height:240px;background:#000"></div>
<div class="" style="left:628px;top:701px;width:716px;height:1px;background:#000"></div>
<span class="t" style="left:631px;top:705px;font-size:12px;letter-spacing:-0.75px">Monday</span>
<div class="" style="left:753px;top:706px;width:576px;height:12px;background:#37bb0e"></div>
<div class="" style="left:628px;top:721px;width:716px;height:1px;background:#000"></div>
<span class="t" style="left:631px;top:725px;font-size:12px;letter-spacing:-0.75px">Tuesday</span>
<div class="" style="left:753px;top:726px;width:576px;height:12px;background:#37bb0e"></div>
<div class="" style="left:628px;top:741px;width:716px;height:1px;background:#000"></div>
<span class="t" style="left:631px;top:745px;font-size:12px;letter-spacing:-0.75px">Wednesday</span>
<div class="" style="left:753px;top:746px;width:576px;height:12px;background:#37bb0e"></div>
<div class="" style="left:628px;top:761px;width:716px;height:1px;background:#000"></div>
<span class="t" style="left:631px;top:765px;font-size:12px;letter-spacing:-0.75px">Thursday</span>
<div class="" style="left:753px;top:766px;width:576px;height:12px;background:#37bb0e"></div>
<div class="" style="left:628px;top:781px;width:716px;height:1px;background:#000"></div>
<span class="t" style="left:631px;top:785px;font-size:12px;letter-spacing:-0.75px">Friday</span>
<div class="" style="left:753px;top:786px;width:576px;height:12px;background:#37bb0e"></div>
<div class="" style="left:628px;top:801px;width:716px;height:1px;background:#000"></div>
<span class="t" style="left:631px;top:805px;font-size:12px;letter-spacing:-0.75px">Saturday</span>
<div class="" style="left:753px;top:806px;width:576px;height:12px;background:#ebd911"></div>
<div class="" style="left:947px;top:806px;width:144px;height:12px;background:#37bb0e"></div>
<div class="" style="left:628px;top:821px;width:716px;height:1px;background:#000"></div>
<span class="t" style="left:631px;top:825px;font-size:12px;letter-spacing:-0.75px">Sunday</span>
<div class="" style="left:753px;top:826px;width:576px;height:12px;background:#0049d2"></div>
<div class="" style="left:628px;top:841px;width:716px;height:1px;background:#000"></div>
<span class="t" style="left:631px;top:845px;font-size:12px;letter-spacing:-0.75px">Feiertag</span>
<div class="" style="left:753px;top:846px;width:576px;height:12px;background:#ebd911"></div>
<div class="" style="left:628px;top:861px;width:716px;height:1px;background:#000"></div>
<span class="t" style="left:631px;top:865px;font-size:12px;letter-spacing:-0.75px">Special Day 1</span>
<div class="" style="left:753px;top:866px;width:576px;height:12px;background:#ebd911"></div>
<div class="" style="left:628px;top:881px;width:716px;height:1px;background:#000"></div>
<span class="t" style="left:631px;top:885px;font-size:12px;letter-spacing:-0.75px">Special Day 2</span>
<div class="" style="left:753px;top:886px;width:576px;height:12px;background:#ebd911"></div>
<div class="" style="left:628px;top:901px;width:716px;height:1px;background:#000"></div>
<span class="t" style="left:631px;top:905px;font-size:12px;letter-spacing:-0.75px">Special Day 3</span>
<div class="" style="left:753px;top:906px;width:576px;height:12px;background:#ebd911"></div>
<span class="t" style="left:741.5px;top:683px;width:26px;text-align:center;font-size:12px;letter-spacing:-0.4px">0</span>
<span class="t" style="left:765.5px;top:683px;width:26px;text-align:center;font-size:12px;letter-spacing:-0.4px">1</span>
<span class="t" style="left:789.5px;top:683px;width:26px;text-align:center;font-size:12px;letter-spacing:-0.4px">2</span>
<span class="t" style="left:813.5px;top:683px;width:26px;text-align:center;font-size:12px;letter-spacing:-0.4px">3</span>
<span class="t" style="left:837.5px;top:683px;width:26px;text-align:center;font-size:12px;letter-spacing:-0.4px">4</span>
<span class="t" style="left:861.5px;top:683px;width:26px;text-align:center;font-size:12px;letter-spacing:-0.4px">5</span>
<span class="t" style="left:885.5px;top:683px;width:26px;text-align:center;font-size:12px;letter-spacing:-0.4px">6</span>
<span class="t" style="left:909.5px;top:683px;width:26px;text-align:center;font-size:12px;letter-spacing:-0.4px">7</span>
<span class="t" style="left:933.5px;top:683px;width:26px;text-align:center;font-size:12px;letter-spacing:-0.4px">8</span>
<span class="t" style="left:957.5px;top:683px;width:26px;text-align:center;font-size:12px;letter-spacing:-0.4px">9</span>
<span class="t" style="left:981.5px;top:683px;width:26px;text-align:center;font-size:12px;letter-spacing:-0.4px">10</span>
<span class="t" style="left:1005.5px;top:683px;width:26px;text-align:center;font-size:12px;letter-spacing:-0.4px">11</span>
<span class="t" style="left:1029.5px;top:683px;width:26px;text-align:center;font-size:12px;letter-spacing:-0.4px">12</span>
<span class="t" style="left:1053.5px;top:683px;width:26px;text-align:center;font-size:12px;letter-spacing:-0.4px">13</span>
<span class="t" style="left:1077.5px;top:683px;width:26px;text-align:center;font-size:12px;letter-spacing:-0.4px">14</span>
<span class="t" style="left:1101.5px;top:683px;width:26px;text-align:center;font-size:12px;letter-spacing:-0.4px">15</span>
<span class="t" style="left:1125.5px;top:683px;width:26px;text-align:center;font-size:12px;letter-spacing:-0.4px">16</span>
<span class="t" style="left:1149.5px;top:683px;width:26px;text-align:center;font-size:12px;letter-spacing:-0.4px">17</span>
<span class="t" style="left:1173.5px;top:683px;width:26px;text-align:center;font-size:12px;letter-spacing:-0.4px">18</span>
<span class="t" style="left:1197.5px;top:683px;width:26px;text-align:center;font-size:12px;letter-spacing:-0.4px">19</span>
<span class="t" style="left:1221.5px;top:683px;width:26px;text-align:center;font-size:12px;letter-spacing:-0.4px">20</span>
<span class="t" style="left:1245.5px;top:683px;width:26px;text-align:center;font-size:12px;letter-spacing:-0.4px">21</span>
<span class="t" style="left:1269.5px;top:683px;width:26px;text-align:center;font-size:12px;letter-spacing:-0.4px">22</span>
<span class="t" style="left:1293.5px;top:683px;width:26px;text-align:center;font-size:12px;letter-spacing:-0.4px">23</span>
<span class="t" style="left:1317.5px;top:683px;width:26px;text-align:center;font-size:12px;letter-spacing:-0.4px">24</span>
<svg class="a" style="left:753px;top:684px" width="578" height="18"><rect x="0" y="12" width="1" height="5" fill="#000"/><rect x="6" y="15" width="1" height="2" fill="#000"/><rect x="12" y="15" width="1" height="2" fill="#000"/><rect x="18" y="15" width="1" height="2" fill="#000"/><rect x="24" y="12" width="1" height="5" fill="#000"/><rect x="30" y="15" width="1" height="2" fill="#000"/><rect x="36" y="15" width="1" height="2" fill="#000"/><rect x="42" y="15" width="1" height="2" fill="#000"/><rect x="48" y="12" width="1" height="5" fill="#000"/><rect x="54" y="15" width="1" height="2" fill="#000"/><rect x="60" y="15" width="1" height="2" fill="#000"/><rect x="66" y="15" width="1" height="2" fill="#000"/><rect x="72" y="12" width="1" height="5" fill="#000"/><rect x="78" y="15" width="1" height="2" fill="#000"/><rect x="84" y="15" width="1" height="2" fill="#000"/><rect x="90" y="15" width="1" height="2" fill="#000"/><rect x="96" y="12" width="1" height="5" fill="#000"/><rect x="102" y="15" width="1" height="2" fill="#000"/><rect x="108" y="15" width="1" height="2" fill="#000"/><rect x="114" y="15" width="1" height="2" fill="#000"/><rect x="120" y="12" width="1" height="5" fill="#000"/><rect x="126" y="15" width="1" height="2" fill="#000"/><rect x="132" y="15" width="1" height="2" fill="#000"/><rect x="138" y="15" width="1" height="2" fill="#000"/><rect x="144" y="12" width="1" height="5" fill="#000"/><rect x="150" y="15" width="1" height="2" fill="#000"/><rect x="156" y="15" width="1" height="2" fill="#000"/><rect x="162" y="15" width="1" height="2" fill="#000"/><rect x="168" y="12" width="1" height="5" fill="#000"/><rect x="174" y="15" width="1" height="2" fill="#000"/><rect x="180" y="15" width="1" height="2" fill="#000"/><rect x="186" y="15" width="1" height="2" fill="#000"/><rect x="192" y="12" width="1" height="5" fill="#000"/><rect x="198" y="15" width="1" height="2" fill="#000"/><rect x="204" y="15" width="1" height="2" fill="#000"/><rect x="210" y="15" width="1" height="2" fill="#000"/><rect x="216" y="12" width="1" height="5" fill="#000"/><rect x="222" y="15" width="1" height="2" fill="#000"/><rect x="228" y="15" width="1" height="2" fill="#000"/><rect x="234" y="15" width="1" height="2" fill="#000"/><rect x="240" y="12" width="1" height="5" fill="#000"/><rect x="246" y="15" width="1" height="2" fill="#000"/><rect x="252" y="15" width="1" height="2" fill="#000"/><rect x="258" y="15" width="1" height="2" fill="#000"/><rect x="264" y="12" width="1" height="5" fill="#000"/><rect x="270" y="15" width="1" height="2" fill="#000"/><rect x="276" y="15" width="1" height="2" fill="#000"/><rect x="282" y="15" width="1" height="2" fill="#000"/><rect x="288" y="12" width="1" height="5" fill="#000"/><rect x="294" y="15" width="1" height="2" fill="#000"/><rect x="300" y="15" width="1" height="2" fill="#000"/><rect x="306" y="15" width="1" height="2" fill="#000"/><rect x="312" y="12" width="1" height="5" fill="#000"/><rect x="318" y="15" width="1" height="2" fill="#000"/><rect x="324" y="15" width="1" height="2" fill="#000"/><rect x="330" y="15" width="1" height="2" fill="#000"/><rect x="336" y="12" width="1" height="5" fill="#000"/><rect x="342" y="15" width="1" height="2" fill="#000"/><rect x="348" y="15" width="1" height="2" fill="#000"/><rect x="354" y="15" width="1" height="2" fill="#000"/><rect x="360" y="12" width="1" height="5" fill="#000"/><rect x="366" y="15" width="1" height="2" fill="#000"/><rect x="372" y="15" width="1" height="2" fill="#000"/><rect x="378" y="15" width="1" height="2" fill="#000"/><rect x="384" y="12" width="1" height="5" fill="#000"/><rect x="390" y="15" width="1" height="2" fill="#000"/><rect x="396" y="15" width="1" height="2" fill="#000"/><rect x="402" y="15" width="1" height="2" fill="#000"/><rect x="408" y="12" width="1" height="5" fill="#000"/><rect x="414" y="15" width="1" height="2" fill="#000"/><rect x="420" y="15" width="1" height="2" fill="#000"/><rect x="426" y="15" width="1" height="2" fill="#000"/><rect x="432" y="12" width="1" height="5" fill="#000"/><rect x="438" y="15" width="1" height="2" fill="#000"/><rect x="444" y="15" width="1" height="2" fill="#000"/><rect x="450" y="15" width="1" height="2" fill="#000"/><rect x="456" y="12" width="1" height="5" fill="#000"/><rect x="462" y="15" width="1" height="2" fill="#000"/><rect x="468" y="15" width="1" height="2" fill="#000"/><rect x="474" y="15" width="1" height="2" fill="#000"/><rect x="480" y="12" width="1" height="5" fill="#000"/><rect x="486" y="15" width="1" height="2" fill="#000"/><rect x="492" y="15" width="1" height="2" fill="#000"/><rect x="498" y="15" width="1" height="2" fill="#000"/><rect x="504" y="12" width="1" height="5" fill="#000"/><rect x="510" y="15" width="1" height="2" fill="#000"/><rect x="516" y="15" width="1" height="2" fill="#000"/><rect x="522" y="15" width="1" height="2" fill="#000"/><rect x="528" y="12" width="1" height="5" fill="#000"/><rect x="534" y="15" width="1" height="2" fill="#000"/><rect x="540" y="15" width="1" height="2" fill="#000"/><rect x="546" y="15" width="1" height="2" fill="#000"/><rect x="552" y="12" width="1" height="5" fill="#000"/><rect x="558" y="15" width="1" height="2" fill="#000"/><rect x="564" y="15" width="1" height="2" fill="#000"/><rect x="570" y="15" width="1" height="2" fill="#000"/><rect x="576" y="12" width="1" height="5" fill="#000"/></svg>
<div class="" style="left:1042px;top:683px;width:38px;height:16px;background:#f2ee72;border:1px solid #000"></div>
<span class="t" style="left:1042px;top:684px;width:38px;text-align:center;font-size:12px;letter-spacing:-0.4px">12 : 50</span>
<div class="" style="left:1061px;top:700px;width:1px;height:221px;background:repeating-linear-gradient(#000 0px,#000 3px,transparent 3px,transparent 6px)"></div>
<div class="" style="left:628px;top:944px;width:10px;height:10px;background:#0049d2"></div>
<span class="t" style="left:648px;top:941px;letter-spacing:-0.2px">Tür unverriegelt gehalten Modus</span>
<div class="cb" style="left:648px;top:958px"></div>
<span class="t" style="left:664px;top:957px;">Release By Card</span>
<div class="" style="left:628px;top:981px;width:10px;height:10px;background:#37bb0e"></div>
<span class="t" style="left:648px;top:978px;letter-spacing:-0.2px">Karte und PIN Code Modus</span>
<div class="" style="left:986px;top:944px;width:10px;height:10px;background:#ee7f0f"></div>
<span class="t" style="left:1006px;top:941px;letter-spacing:-0.2px">Karte oder allgemeinen Modus</span>
<div class="" style="left:986px;top:981px;width:10px;height:10px;background:#ebd911"></div>
<span class="t" style="left:1006px;top:978px;letter-spacing:-0.2px">Nur Karte Modus</span>
<div class="btn def" style="left:1183px;top:1005px;width:73px;height:21px;line-height:19px">OK</div>
<div class="btn" style="left:1270px;top:1005px;width:73px;height:21px;line-height:19px">Abbrechen</div>
</div></body></html>
